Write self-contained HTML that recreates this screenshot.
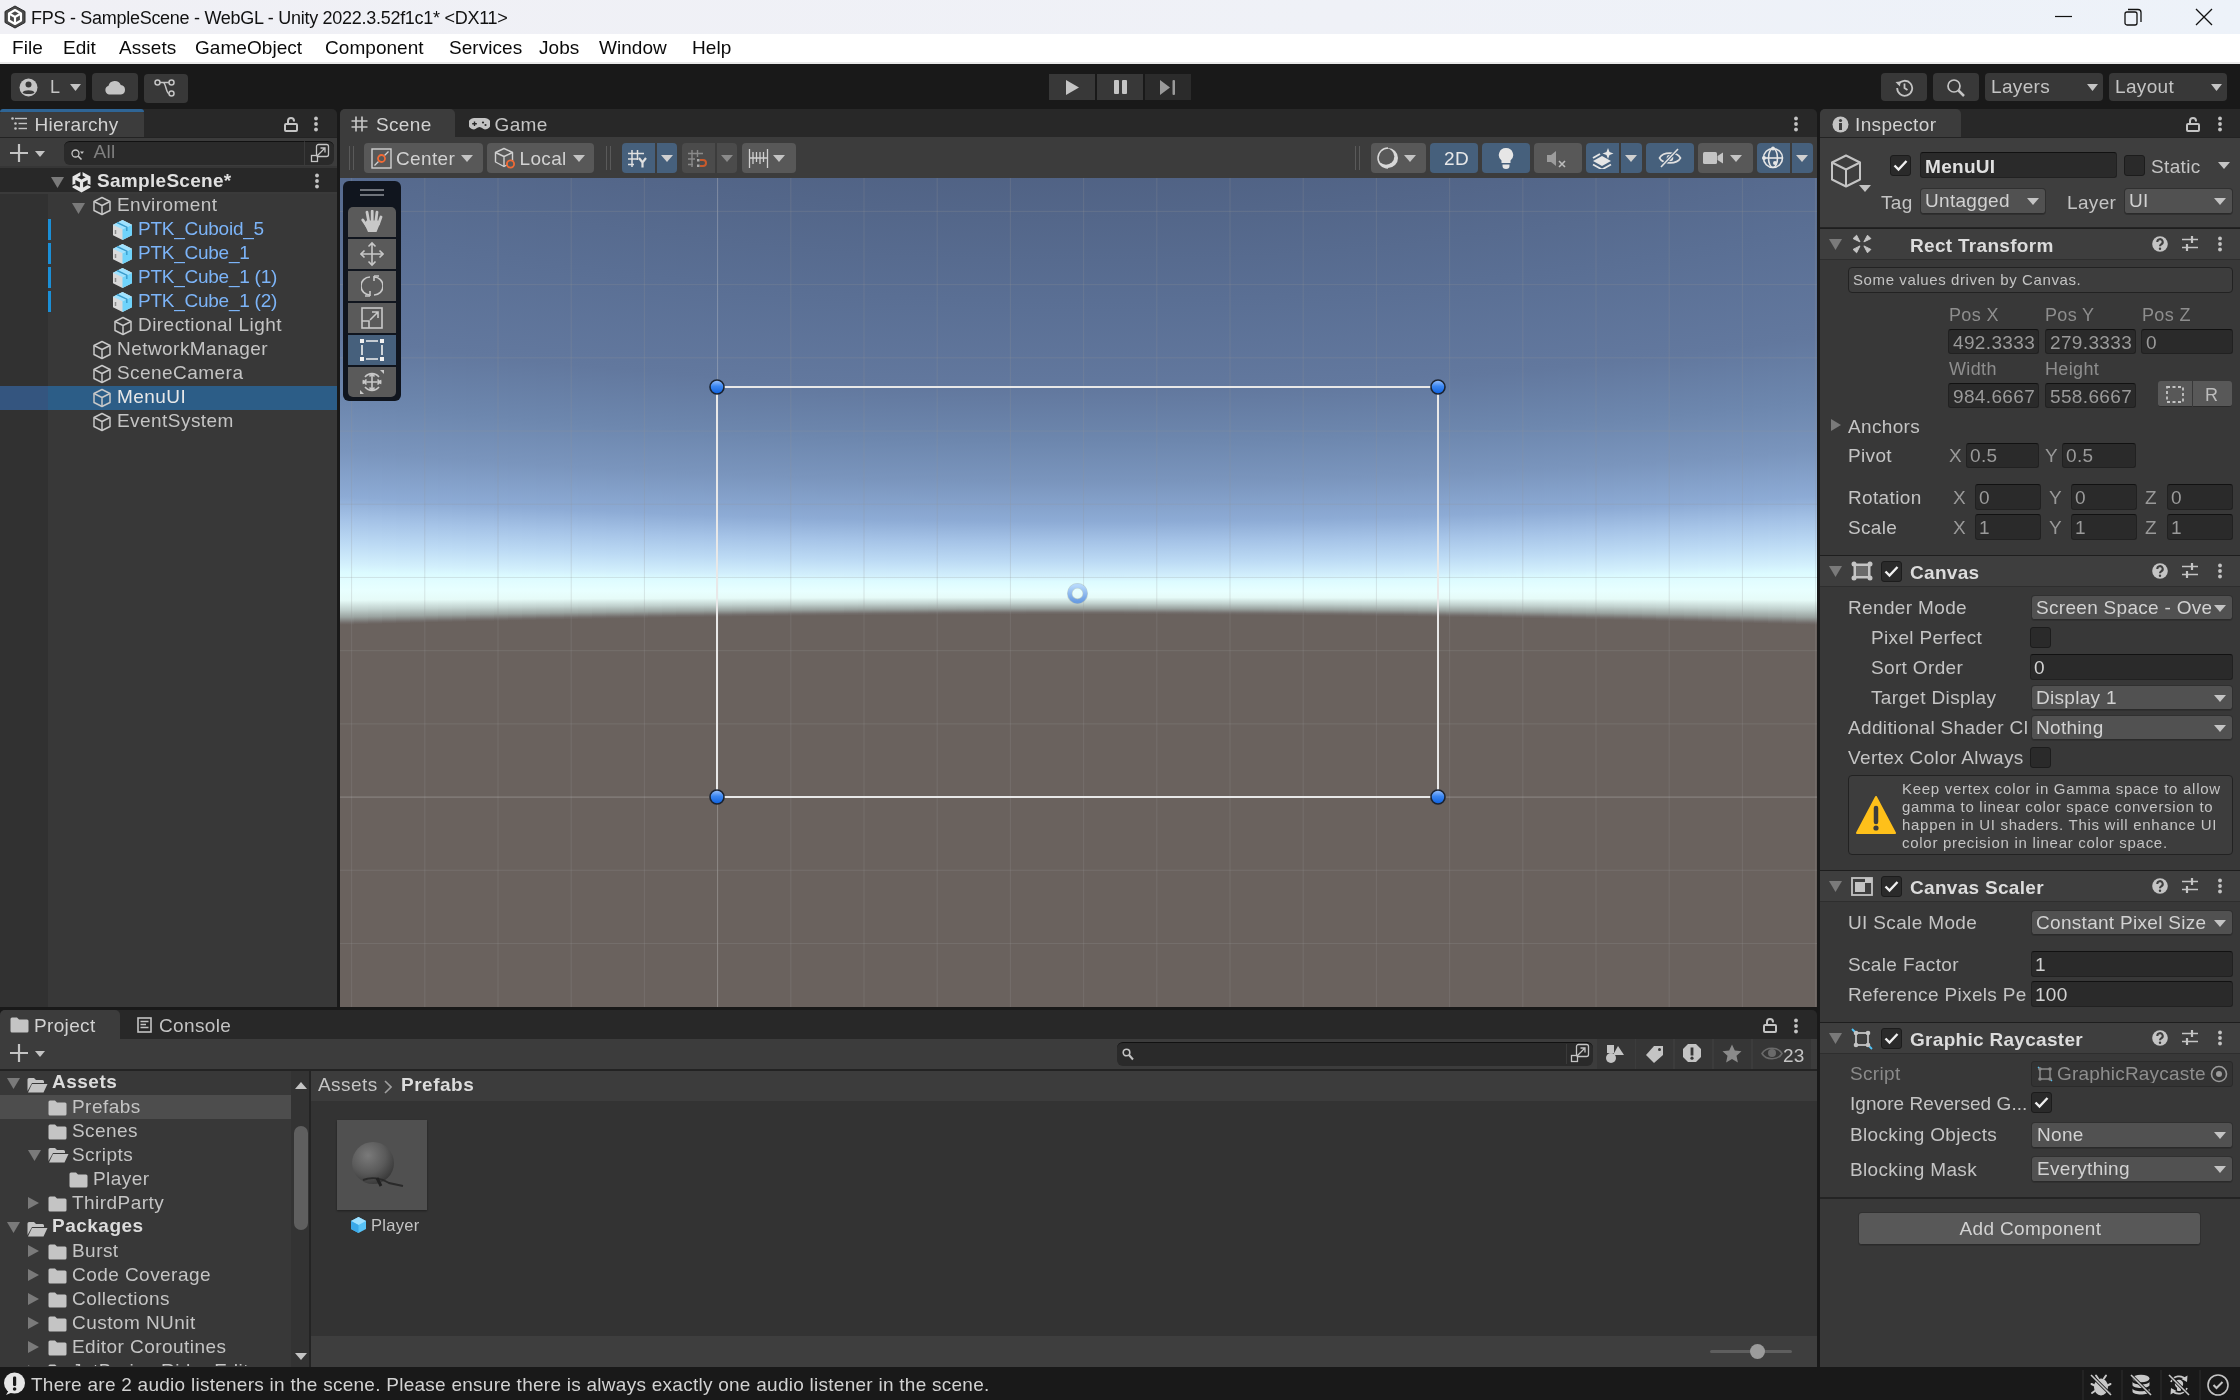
<!DOCTYPE html><html><head><meta charset="utf-8"><title>Unity</title><style>*{margin:0;padding:0;box-sizing:border-box}
html,body{width:2240px;height:1400px;overflow:hidden;background:#191919}
#r{will-change:transform;position:relative;width:2240px;height:1400px;overflow:hidden;font-family:"Liberation Sans",sans-serif}
#r>*{position:absolute}
.t{white-space:nowrap;line-height:1}
</style></head><body><div id="r"><div style="left:0px;top:0px;width:2240px;height:34px;background:linear-gradient(90deg,#f0f0f5 0%,#eff1f7 60%,#edf2f9 100%);"></div>
<div style="left:0px;top:34px;width:2240px;height:28px;background:#ffffff;"></div>
<div style="left:0px;top:62px;width:2240px;height:2px;background:#e9e9e9;"></div>
<div style="left:0px;top:64px;width:2240px;height:45px;background:#191919;"></div>
<div style="left:0px;top:109px;width:337px;height:28px;background:#282828;border-radius:5px 5px 0 0"></div>
<div style="left:0px;top:109px;width:144px;height:28px;background:#3c3c3c;border-radius:5px 5px 0 0"></div>
<div style="left:0px;top:109px;width:144px;height:3px;background:#2f6595;border-radius:5px 5px 0 0"></div>
<div style="left:0px;top:137px;width:337px;height:1px;background:#232323;"></div>
<div style="left:0px;top:138px;width:337px;height:28px;background:#3c3c3c;"></div>
<div style="left:0px;top:166px;width:337px;height:2px;background:#363636;"></div>
<div style="left:0px;top:168px;width:337px;height:24px;background:#282828;"></div>
<div style="left:0px;top:192px;width:337px;height:2px;background:#3a3a3a;"></div>
<div style="left:0px;top:194px;width:48px;height:813px;background:#313131;"></div>
<div style="left:48px;top:194px;width:289px;height:813px;background:#383838;"></div>
<div style="left:340px;top:109px;width:1477px;height:28px;background:#282828;border-radius:5px 5px 0 0"></div>
<div style="left:340px;top:109px;width:115px;height:28px;background:#3c3c3c;border-radius:5px 5px 0 0"></div>
<div style="left:340px;top:137px;width:1477px;height:41px;background:#3c3c3c;"></div>
<div style="left:1820px;top:109px;width:420px;height:29px;background:#282828;border-radius:5px 0 0 0"></div>
<div style="left:1820px;top:109px;width:141px;height:29px;background:#3c3c3c;border-radius:5px 5px 0 0"></div>
<div style="left:1820px;top:137px;width:420px;height:1px;background:#232323;"></div>
<div style="left:1820px;top:138px;width:420px;height:1229px;background:#383838;"></div>
<div style="left:0px;top:1010px;width:1817px;height:29px;background:#282828;border-radius:5px 5px 0 0"></div>
<div style="left:0px;top:1010px;width:120px;height:29px;background:#3c3c3c;border-radius:5px 5px 0 0"></div>
<div style="left:0px;top:1039px;width:1817px;height:30px;background:#3c3c3c;"></div>
<div style="left:0px;top:1069px;width:1817px;height:2px;background:#232323;"></div>
<div style="left:0px;top:1071px;width:291px;height:296px;background:#383838;"></div>
<div style="left:291px;top:1071px;width:18px;height:296px;background:#333333;"></div>
<div style="left:309px;top:1071px;width:2px;height:296px;background:#242424;"></div>
<div style="left:311px;top:1071px;width:1506px;height:30px;background:#3c3c3c;"></div>
<div style="left:311px;top:1101px;width:1506px;height:235px;background:#333333;"></div>
<div style="left:311px;top:1336px;width:1506px;height:31px;background:#3e3e3e;"></div>
<div style="left:0px;top:1367px;width:2240px;height:33px;background:#191919;"></div>
<div style="left:340px;top:178px;width:1477px;height:829px;background:#6a625e;overflow:hidden"><div style="position:absolute;left:0px;top:0;width:14px;height:829px;background:linear-gradient(180deg,#506284 -108.2px,#5a6f94 50.9px,#62789e 159.5px,#6d87ae 223.6px,#7a95bd 272.9px,#8dabd5 318.9px,#a5c3e7 341.8px,#bcdaf4 365.1px,#d2effc 385.6px,#dcfbff 394.7px,#e8ffff 412.2px,#e6fbf8 422.2px,#c0d0cd 431.7px,#9aa3a0 439.2px,#736e6c 444.8px,#6a625e 446.8px)"></div><div style="position:absolute;left:14px;top:0;width:14px;height:829px;background:linear-gradient(180deg,#506284 -104.3px,#5a6f94 53.7px,#62789e 161.4px,#6d87ae 225.1px,#7a95bd 274.1px,#8dabd5 319.8px,#a5c3e7 342.6px,#bcdaf4 365.8px,#d2effc 386.1px,#dcfbff 395.0px,#e8ffff 412.2px,#e6fbf8 422.1px,#c0d0cd 431.5px,#9aa3a0 438.9px,#736e6c 444.4px,#6a625e 446.4px)"></div><div style="position:absolute;left:28px;top:0;width:14px;height:829px;background:linear-gradient(180deg,#506284 -100.5px,#5a6f94 56.4px,#62789e 163.4px,#6d87ae 226.6px,#7a95bd 275.2px,#8dabd5 320.7px,#a5c3e7 343.4px,#bcdaf4 366.5px,#d2effc 386.6px,#dcfbff 395.3px,#e8ffff 412.3px,#e6fbf8 422.0px,#c0d0cd 431.2px,#9aa3a0 438.6px,#736e6c 444.0px,#6a625e 446.0px)"></div><div style="position:absolute;left:42px;top:0;width:14px;height:829px;background:linear-gradient(180deg,#506284 -96.7px,#5a6f94 59.0px,#62789e 165.3px,#6d87ae 228.0px,#7a95bd 276.3px,#8dabd5 321.6px,#a5c3e7 344.2px,#bcdaf4 367.1px,#d2effc 387.0px,#dcfbff 395.7px,#e8ffff 412.3px,#e6fbf8 421.9px,#c0d0cd 431.0px,#9aa3a0 438.2px,#736e6c 443.6px,#6a625e 445.6px)"></div><div style="position:absolute;left:56px;top:0;width:14px;height:829px;background:linear-gradient(180deg,#506284 -93.1px,#5a6f94 61.6px,#62789e 167.1px,#6d87ae 229.5px,#7a95bd 277.4px,#8dabd5 322.5px,#a5c3e7 345.0px,#bcdaf4 367.8px,#d2effc 387.5px,#dcfbff 396.0px,#e8ffff 412.4px,#e6fbf8 421.8px,#c0d0cd 430.8px,#9aa3a0 437.9px,#736e6c 443.2px,#6a625e 445.2px)"></div><div style="position:absolute;left:70px;top:0;width:14px;height:829px;background:linear-gradient(180deg,#506284 -89.5px,#5a6f94 64.1px,#62789e 168.9px,#6d87ae 230.9px,#7a95bd 278.5px,#8dabd5 323.4px,#a5c3e7 345.7px,#bcdaf4 368.4px,#d2effc 387.9px,#dcfbff 396.3px,#e8ffff 412.4px,#e6fbf8 421.7px,#c0d0cd 430.6px,#9aa3a0 437.6px,#736e6c 442.9px,#6a625e 444.9px)"></div><div style="position:absolute;left:84px;top:0;width:14px;height:829px;background:linear-gradient(180deg,#506284 -86.0px,#5a6f94 66.6px,#62789e 170.7px,#6d87ae 232.2px,#7a95bd 279.5px,#8dabd5 324.2px,#a5c3e7 346.5px,#bcdaf4 369.1px,#d2effc 388.4px,#dcfbff 396.6px,#e8ffff 412.5px,#e6fbf8 421.6px,#c0d0cd 430.4px,#9aa3a0 437.3px,#736e6c 442.5px,#6a625e 444.5px)"></div><div style="position:absolute;left:98px;top:0;width:14px;height:829px;background:linear-gradient(180deg,#506284 -82.5px,#5a6f94 69.1px,#62789e 172.5px,#6d87ae 233.6px,#7a95bd 280.6px,#8dabd5 325.0px,#a5c3e7 347.2px,#bcdaf4 369.7px,#d2effc 388.8px,#dcfbff 396.9px,#e8ffff 412.5px,#e6fbf8 421.5px,#c0d0cd 430.2px,#9aa3a0 437.0px,#736e6c 442.2px,#6a625e 444.2px)"></div><div style="position:absolute;left:112px;top:0;width:14px;height:829px;background:linear-gradient(180deg,#506284 -79.2px,#5a6f94 71.4px,#62789e 174.2px,#6d87ae 234.9px,#7a95bd 281.6px,#8dabd5 325.9px,#a5c3e7 347.9px,#bcdaf4 370.3px,#d2effc 389.2px,#dcfbff 397.2px,#e8ffff 412.5px,#e6fbf8 421.4px,#c0d0cd 430.0px,#9aa3a0 436.8px,#736e6c 441.9px,#6a625e 443.9px)"></div><div style="position:absolute;left:126px;top:0;width:14px;height:829px;background:linear-gradient(180deg,#506284 -75.9px,#5a6f94 73.8px,#62789e 175.8px,#6d87ae 236.2px,#7a95bd 282.6px,#8dabd5 326.6px,#a5c3e7 348.6px,#bcdaf4 370.9px,#d2effc 389.7px,#dcfbff 397.5px,#e8ffff 412.6px,#e6fbf8 421.3px,#c0d0cd 429.8px,#9aa3a0 436.5px,#736e6c 441.5px,#6a625e 443.5px)"></div><div style="position:absolute;left:140px;top:0;width:14px;height:829px;background:linear-gradient(180deg,#506284 -72.6px,#5a6f94 76.0px,#62789e 177.5px,#6d87ae 237.4px,#7a95bd 283.5px,#8dabd5 327.4px,#a5c3e7 349.3px,#bcdaf4 371.5px,#d2effc 390.1px,#dcfbff 397.7px,#e8ffff 412.6px,#e6fbf8 421.2px,#c0d0cd 429.6px,#9aa3a0 436.2px,#736e6c 441.2px,#6a625e 443.2px)"></div><div style="position:absolute;left:154px;top:0;width:14px;height:829px;background:linear-gradient(180deg,#506284 -69.5px,#5a6f94 78.3px,#62789e 179.1px,#6d87ae 238.6px,#7a95bd 284.4px,#8dabd5 328.2px,#a5c3e7 350.0px,#bcdaf4 372.0px,#d2effc 390.5px,#dcfbff 398.0px,#e8ffff 412.7px,#e6fbf8 421.2px,#c0d0cd 429.4px,#9aa3a0 435.9px,#736e6c 440.9px,#6a625e 442.9px)"></div><div style="position:absolute;left:168px;top:0;width:14px;height:829px;background:linear-gradient(180deg,#506284 -66.4px,#5a6f94 80.4px,#62789e 180.6px,#6d87ae 239.8px,#7a95bd 285.4px,#8dabd5 328.9px,#a5c3e7 350.6px,#bcdaf4 372.6px,#d2effc 390.8px,#dcfbff 398.3px,#e8ffff 412.7px,#e6fbf8 421.1px,#c0d0cd 429.2px,#9aa3a0 435.7px,#736e6c 440.6px,#6a625e 442.6px)"></div><div style="position:absolute;left:182px;top:0;width:14px;height:829px;background:linear-gradient(180deg,#506284 -63.5px,#5a6f94 82.5px,#62789e 182.1px,#6d87ae 241.0px,#7a95bd 286.2px,#8dabd5 329.6px,#a5c3e7 351.2px,#bcdaf4 373.1px,#d2effc 391.2px,#dcfbff 398.5px,#e8ffff 412.7px,#e6fbf8 421.0px,#c0d0cd 429.0px,#9aa3a0 435.4px,#736e6c 440.3px,#6a625e 442.3px)"></div><div style="position:absolute;left:196px;top:0;width:14px;height:829px;background:linear-gradient(180deg,#506284 -60.5px,#5a6f94 84.6px,#62789e 183.6px,#6d87ae 242.1px,#7a95bd 287.1px,#8dabd5 330.3px,#a5c3e7 351.9px,#bcdaf4 373.6px,#d2effc 391.6px,#dcfbff 398.8px,#e8ffff 412.8px,#e6fbf8 420.9px,#c0d0cd 428.8px,#9aa3a0 435.2px,#736e6c 440.0px,#6a625e 442.0px)"></div><div style="position:absolute;left:210px;top:0;width:14px;height:829px;background:linear-gradient(180deg,#506284 -57.7px,#5a6f94 86.6px,#62789e 185.0px,#6d87ae 243.2px,#7a95bd 288.0px,#8dabd5 331.0px,#a5c3e7 352.5px,#bcdaf4 374.1px,#d2effc 391.9px,#dcfbff 399.0px,#e8ffff 412.8px,#e6fbf8 420.9px,#c0d0cd 428.7px,#9aa3a0 434.9px,#736e6c 439.7px,#6a625e 441.7px)"></div><div style="position:absolute;left:224px;top:0;width:14px;height:829px;background:linear-gradient(180deg,#506284 -54.9px,#5a6f94 88.6px,#62789e 186.4px,#6d87ae 244.3px,#7a95bd 288.8px,#8dabd5 331.7px,#a5c3e7 353.0px,#bcdaf4 374.6px,#d2effc 392.3px,#dcfbff 399.3px,#e8ffff 412.9px,#e6fbf8 420.8px,#c0d0cd 428.5px,#9aa3a0 434.7px,#736e6c 439.4px,#6a625e 441.4px)"></div><div style="position:absolute;left:238px;top:0;width:14px;height:829px;background:linear-gradient(180deg,#506284 -52.2px,#5a6f94 90.5px,#62789e 187.8px,#6d87ae 245.3px,#7a95bd 289.6px,#8dabd5 332.3px,#a5c3e7 353.6px,#bcdaf4 375.1px,#d2effc 392.6px,#dcfbff 399.5px,#e8ffff 412.9px,#e6fbf8 420.7px,#c0d0cd 428.3px,#9aa3a0 434.5px,#736e6c 439.2px,#6a625e 441.2px)"></div><div style="position:absolute;left:252px;top:0;width:14px;height:829px;background:linear-gradient(180deg,#506284 -49.6px,#5a6f94 92.3px,#62789e 189.1px,#6d87ae 246.4px,#7a95bd 290.4px,#8dabd5 332.9px,#a5c3e7 354.2px,#bcdaf4 375.6px,#d2effc 393.0px,#dcfbff 399.7px,#e8ffff 412.9px,#e6fbf8 420.6px,#c0d0cd 428.2px,#9aa3a0 434.2px,#736e6c 438.9px,#6a625e 440.9px)"></div><div style="position:absolute;left:266px;top:0;width:14px;height:829px;background:linear-gradient(180deg,#506284 -47.1px,#5a6f94 94.1px,#62789e 190.4px,#6d87ae 247.3px,#7a95bd 291.1px,#8dabd5 333.5px,#a5c3e7 354.7px,#bcdaf4 376.0px,#d2effc 393.3px,#dcfbff 399.9px,#e8ffff 413.0px,#e6fbf8 420.6px,#c0d0cd 428.0px,#9aa3a0 434.0px,#736e6c 438.7px,#6a625e 440.7px)"></div><div style="position:absolute;left:280px;top:0;width:14px;height:829px;background:linear-gradient(180deg,#506284 -44.6px,#5a6f94 95.8px,#62789e 191.7px,#6d87ae 248.3px,#7a95bd 291.9px,#8dabd5 334.1px,#a5c3e7 355.2px,#bcdaf4 376.5px,#d2effc 393.6px,#dcfbff 400.1px,#e8ffff 413.0px,#e6fbf8 420.5px,#c0d0cd 427.9px,#9aa3a0 433.8px,#736e6c 438.4px,#6a625e 440.4px)"></div><div style="position:absolute;left:294px;top:0;width:14px;height:829px;background:linear-gradient(180deg,#506284 -42.2px,#5a6f94 97.5px,#62789e 192.9px,#6d87ae 249.2px,#7a95bd 292.6px,#8dabd5 334.7px,#a5c3e7 355.7px,#bcdaf4 376.9px,#d2effc 393.9px,#dcfbff 400.3px,#e8ffff 413.0px,#e6fbf8 420.5px,#c0d0cd 427.7px,#9aa3a0 433.6px,#736e6c 438.2px,#6a625e 440.2px)"></div><div style="position:absolute;left:308px;top:0;width:14px;height:829px;background:linear-gradient(180deg,#506284 -39.9px,#5a6f94 99.2px,#62789e 194.1px,#6d87ae 250.1px,#7a95bd 293.3px,#8dabd5 335.3px,#a5c3e7 356.2px,#bcdaf4 377.3px,#d2effc 394.2px,#dcfbff 400.5px,#e8ffff 413.1px,#e6fbf8 420.4px,#c0d0cd 427.6px,#9aa3a0 433.4px,#736e6c 437.9px,#6a625e 439.9px)"></div><div style="position:absolute;left:322px;top:0;width:14px;height:829px;background:linear-gradient(180deg,#506284 -37.7px,#5a6f94 100.8px,#62789e 195.2px,#6d87ae 251.0px,#7a95bd 293.9px,#8dabd5 335.8px,#a5c3e7 356.7px,#bcdaf4 377.7px,#d2effc 394.5px,#dcfbff 400.7px,#e8ffff 413.1px,#e6fbf8 420.3px,#c0d0cd 427.4px,#9aa3a0 433.2px,#736e6c 437.7px,#6a625e 439.7px)"></div><div style="position:absolute;left:336px;top:0;width:14px;height:829px;background:linear-gradient(180deg,#506284 -35.5px,#5a6f94 102.3px,#62789e 196.3px,#6d87ae 251.8px,#7a95bd 294.6px,#8dabd5 336.3px,#a5c3e7 357.1px,#bcdaf4 378.1px,#d2effc 394.7px,#dcfbff 400.9px,#e8ffff 413.1px,#e6fbf8 420.3px,#c0d0cd 427.3px,#9aa3a0 433.0px,#736e6c 437.5px,#6a625e 439.5px)"></div><div style="position:absolute;left:350px;top:0;width:14px;height:829px;background:linear-gradient(180deg,#506284 -33.4px,#5a6f94 103.8px,#62789e 197.3px,#6d87ae 252.6px,#7a95bd 295.2px,#8dabd5 336.8px,#a5c3e7 357.6px,#bcdaf4 378.5px,#d2effc 395.0px,#dcfbff 401.1px,#e8ffff 413.1px,#e6fbf8 420.2px,#c0d0cd 427.2px,#9aa3a0 432.9px,#736e6c 437.3px,#6a625e 439.3px)"></div><div style="position:absolute;left:364px;top:0;width:14px;height:829px;background:linear-gradient(180deg,#506284 -31.4px,#5a6f94 105.2px,#62789e 198.4px,#6d87ae 253.4px,#7a95bd 295.8px,#8dabd5 337.3px,#a5c3e7 358.0px,#bcdaf4 378.9px,#d2effc 395.2px,#dcfbff 401.3px,#e8ffff 413.2px,#e6fbf8 420.2px,#c0d0cd 427.1px,#9aa3a0 432.7px,#736e6c 437.1px,#6a625e 439.1px)"></div><div style="position:absolute;left:378px;top:0;width:14px;height:829px;background:linear-gradient(180deg,#506284 -29.5px,#5a6f94 106.5px,#62789e 199.3px,#6d87ae 254.2px,#7a95bd 296.4px,#8dabd5 337.8px,#a5c3e7 358.4px,#bcdaf4 379.2px,#d2effc 395.5px,#dcfbff 401.4px,#e8ffff 413.2px,#e6fbf8 420.1px,#c0d0cd 427.0px,#9aa3a0 432.5px,#736e6c 436.9px,#6a625e 438.9px)"></div><div style="position:absolute;left:392px;top:0;width:14px;height:829px;background:linear-gradient(180deg,#506284 -27.6px,#5a6f94 107.9px,#62789e 200.3px,#6d87ae 254.9px,#7a95bd 296.9px,#8dabd5 338.2px,#a5c3e7 358.8px,#bcdaf4 379.5px,#d2effc 395.7px,#dcfbff 401.6px,#e8ffff 413.2px,#e6fbf8 420.1px,#c0d0cd 426.8px,#9aa3a0 432.4px,#736e6c 436.7px,#6a625e 438.7px)"></div><div style="position:absolute;left:406px;top:0;width:14px;height:829px;background:linear-gradient(180deg,#506284 -25.8px,#5a6f94 109.1px,#62789e 201.2px,#6d87ae 255.6px,#7a95bd 297.4px,#8dabd5 338.6px,#a5c3e7 359.2px,#bcdaf4 379.9px,#d2effc 395.9px,#dcfbff 401.8px,#e8ffff 413.2px,#e6fbf8 420.0px,#c0d0cd 426.7px,#9aa3a0 432.2px,#736e6c 436.5px,#6a625e 438.5px)"></div><div style="position:absolute;left:420px;top:0;width:14px;height:829px;background:linear-gradient(180deg,#506284 -24.1px,#5a6f94 110.3px,#62789e 202.1px,#6d87ae 256.3px,#7a95bd 298.0px,#8dabd5 339.0px,#a5c3e7 359.6px,#bcdaf4 380.2px,#d2effc 396.2px,#dcfbff 401.9px,#e8ffff 413.3px,#e6fbf8 420.0px,#c0d0cd 426.6px,#9aa3a0 432.1px,#736e6c 436.4px,#6a625e 438.4px)"></div><div style="position:absolute;left:434px;top:0;width:14px;height:829px;background:linear-gradient(180deg,#506284 -22.5px,#5a6f94 111.5px,#62789e 202.9px,#6d87ae 256.9px,#7a95bd 298.4px,#8dabd5 339.4px,#a5c3e7 359.9px,#bcdaf4 380.5px,#d2effc 396.4px,#dcfbff 402.0px,#e8ffff 413.3px,#e6fbf8 419.9px,#c0d0cd 426.5px,#9aa3a0 431.9px,#736e6c 436.2px,#6a625e 438.2px)"></div><div style="position:absolute;left:448px;top:0;width:14px;height:829px;background:linear-gradient(180deg,#506284 -20.9px,#5a6f94 112.6px,#62789e 203.7px,#6d87ae 257.5px,#7a95bd 298.9px,#8dabd5 339.8px,#a5c3e7 360.2px,#bcdaf4 380.7px,#d2effc 396.6px,#dcfbff 402.2px,#e8ffff 413.3px,#e6fbf8 419.9px,#c0d0cd 426.4px,#9aa3a0 431.8px,#736e6c 436.0px,#6a625e 438.0px)"></div><div style="position:absolute;left:462px;top:0;width:14px;height:829px;background:linear-gradient(180deg,#506284 -19.4px,#5a6f94 113.6px,#62789e 204.4px,#6d87ae 258.1px,#7a95bd 299.3px,#8dabd5 340.2px,#a5c3e7 360.5px,#bcdaf4 381.0px,#d2effc 396.7px,#dcfbff 402.3px,#e8ffff 413.3px,#e6fbf8 419.9px,#c0d0cd 426.3px,#9aa3a0 431.7px,#736e6c 435.9px,#6a625e 437.9px)"></div><div style="position:absolute;left:476px;top:0;width:14px;height:829px;background:linear-gradient(180deg,#506284 -18.0px,#5a6f94 114.6px,#62789e 205.2px,#6d87ae 258.6px,#7a95bd 299.8px,#8dabd5 340.5px,#a5c3e7 360.8px,#bcdaf4 381.3px,#d2effc 396.9px,#dcfbff 402.4px,#e8ffff 413.3px,#e6fbf8 419.8px,#c0d0cd 426.3px,#9aa3a0 431.6px,#736e6c 435.8px,#6a625e 437.8px)"></div><div style="position:absolute;left:490px;top:0;width:14px;height:829px;background:linear-gradient(180deg,#506284 -16.7px,#5a6f94 115.6px,#62789e 205.8px,#6d87ae 259.1px,#7a95bd 300.2px,#8dabd5 340.8px,#a5c3e7 361.1px,#bcdaf4 381.5px,#d2effc 397.1px,#dcfbff 402.5px,#e8ffff 413.4px,#e6fbf8 419.8px,#c0d0cd 426.2px,#9aa3a0 431.5px,#736e6c 435.6px,#6a625e 437.6px)"></div><div style="position:absolute;left:504px;top:0;width:14px;height:829px;background:linear-gradient(180deg,#506284 -15.4px,#5a6f94 116.5px,#62789e 206.5px,#6d87ae 259.6px,#7a95bd 300.5px,#8dabd5 341.1px,#a5c3e7 361.4px,#bcdaf4 381.7px,#d2effc 397.3px,#dcfbff 402.6px,#e8ffff 413.4px,#e6fbf8 419.8px,#c0d0cd 426.1px,#9aa3a0 431.3px,#736e6c 435.5px,#6a625e 437.5px)"></div><div style="position:absolute;left:518px;top:0;width:14px;height:829px;background:linear-gradient(180deg,#506284 -14.2px,#5a6f94 117.3px,#62789e 207.1px,#6d87ae 260.1px,#7a95bd 300.9px,#8dabd5 341.4px,#a5c3e7 361.6px,#bcdaf4 381.9px,#d2effc 397.4px,#dcfbff 402.7px,#e8ffff 413.4px,#e6fbf8 419.7px,#c0d0cd 426.0px,#9aa3a0 431.2px,#736e6c 435.4px,#6a625e 437.4px)"></div><div style="position:absolute;left:532px;top:0;width:14px;height:829px;background:linear-gradient(180deg,#506284 -13.1px,#5a6f94 118.1px,#62789e 207.6px,#6d87ae 260.5px,#7a95bd 301.2px,#8dabd5 341.7px,#a5c3e7 361.9px,#bcdaf4 382.1px,#d2effc 397.5px,#dcfbff 402.8px,#e8ffff 413.4px,#e6fbf8 419.7px,#c0d0cd 426.0px,#9aa3a0 431.1px,#736e6c 435.3px,#6a625e 437.3px)"></div><div style="position:absolute;left:546px;top:0;width:14px;height:829px;background:linear-gradient(180deg,#506284 -12.1px,#5a6f94 118.8px,#62789e 208.2px,#6d87ae 260.9px,#7a95bd 301.5px,#8dabd5 341.9px,#a5c3e7 362.1px,#bcdaf4 382.3px,#d2effc 397.7px,#dcfbff 402.9px,#e8ffff 413.4px,#e6fbf8 419.7px,#c0d0cd 425.9px,#9aa3a0 431.1px,#736e6c 435.2px,#6a625e 437.2px)"></div><div style="position:absolute;left:560px;top:0;width:14px;height:829px;background:linear-gradient(180deg,#506284 -11.1px,#5a6f94 119.5px,#62789e 208.6px,#6d87ae 261.3px,#7a95bd 301.8px,#8dabd5 342.1px,#a5c3e7 362.3px,#bcdaf4 382.5px,#d2effc 397.8px,#dcfbff 403.0px,#e8ffff 413.4px,#e6fbf8 419.6px,#c0d0cd 425.8px,#9aa3a0 431.0px,#736e6c 435.1px,#6a625e 437.1px)"></div><div style="position:absolute;left:574px;top:0;width:14px;height:829px;background:linear-gradient(180deg,#506284 -10.3px,#5a6f94 120.1px,#62789e 209.1px,#6d87ae 261.6px,#7a95bd 302.1px,#8dabd5 342.4px,#a5c3e7 362.5px,#bcdaf4 382.6px,#d2effc 397.9px,#dcfbff 403.1px,#e8ffff 413.4px,#e6fbf8 419.6px,#c0d0cd 425.8px,#9aa3a0 430.9px,#736e6c 435.0px,#6a625e 437.0px)"></div><div style="position:absolute;left:588px;top:0;width:14px;height:829px;background:linear-gradient(180deg,#506284 -9.5px,#5a6f94 120.7px,#62789e 209.5px,#6d87ae 262.0px,#7a95bd 302.3px,#8dabd5 342.6px,#a5c3e7 362.7px,#bcdaf4 382.8px,#d2effc 398.0px,#dcfbff 403.2px,#e8ffff 413.4px,#e6fbf8 419.6px,#c0d0cd 425.7px,#9aa3a0 430.8px,#736e6c 434.9px,#6a625e 436.9px)"></div><div style="position:absolute;left:602px;top:0;width:14px;height:829px;background:linear-gradient(180deg,#506284 -8.7px,#5a6f94 121.2px,#62789e 209.9px,#6d87ae 262.2px,#7a95bd 302.5px,#8dabd5 342.7px,#a5c3e7 362.8px,#bcdaf4 382.9px,#d2effc 398.1px,#dcfbff 403.2px,#e8ffff 413.5px,#e6fbf8 419.6px,#c0d0cd 425.7px,#9aa3a0 430.8px,#736e6c 434.8px,#6a625e 436.8px)"></div><div style="position:absolute;left:616px;top:0;width:14px;height:829px;background:linear-gradient(180deg,#506284 -8.1px,#5a6f94 121.7px,#62789e 210.2px,#6d87ae 262.5px,#7a95bd 302.7px,#8dabd5 342.9px,#a5c3e7 363.0px,#bcdaf4 383.0px,#d2effc 398.2px,#dcfbff 403.3px,#e8ffff 413.5px,#e6fbf8 419.6px,#c0d0cd 425.7px,#9aa3a0 430.7px,#736e6c 434.8px,#6a625e 436.8px)"></div><div style="position:absolute;left:630px;top:0;width:14px;height:829px;background:linear-gradient(180deg,#506284 -7.5px,#5a6f94 122.1px,#62789e 210.5px,#6d87ae 262.7px,#7a95bd 302.9px,#8dabd5 343.0px,#a5c3e7 363.1px,#bcdaf4 383.1px,#d2effc 398.3px,#dcfbff 403.3px,#e8ffff 413.5px,#e6fbf8 419.6px,#c0d0cd 425.6px,#9aa3a0 430.7px,#736e6c 434.7px,#6a625e 436.7px)"></div><div style="position:absolute;left:644px;top:0;width:14px;height:829px;background:linear-gradient(180deg,#506284 -7.0px,#5a6f94 122.5px,#62789e 210.8px,#6d87ae 262.9px,#7a95bd 303.1px,#8dabd5 343.1px,#a5c3e7 363.2px,#bcdaf4 383.2px,#d2effc 398.3px,#dcfbff 403.4px,#e8ffff 413.5px,#e6fbf8 419.5px,#c0d0cd 425.6px,#9aa3a0 430.6px,#736e6c 434.6px,#6a625e 436.6px)"></div><div style="position:absolute;left:658px;top:0;width:14px;height:829px;background:linear-gradient(180deg,#506284 -6.5px,#5a6f94 122.8px,#62789e 211.0px,#6d87ae 263.1px,#7a95bd 303.2px,#8dabd5 343.3px,#a5c3e7 363.3px,#bcdaf4 383.3px,#d2effc 398.4px,#dcfbff 403.4px,#e8ffff 413.5px,#e6fbf8 419.5px,#c0d0cd 425.6px,#9aa3a0 430.6px,#736e6c 434.6px,#6a625e 436.6px)"></div><div style="position:absolute;left:672px;top:0;width:14px;height:829px;background:linear-gradient(180deg,#506284 -6.2px,#5a6f94 123.0px,#62789e 211.2px,#6d87ae 263.2px,#7a95bd 303.3px,#8dabd5 343.3px,#a5c3e7 363.4px,#bcdaf4 383.4px,#d2effc 398.4px,#dcfbff 403.4px,#e8ffff 413.5px,#e6fbf8 419.5px,#c0d0cd 425.5px,#9aa3a0 430.6px,#736e6c 434.6px,#6a625e 436.6px)"></div><div style="position:absolute;left:686px;top:0;width:14px;height:829px;background:linear-gradient(180deg,#506284 -5.9px,#5a6f94 123.2px,#62789e 211.3px,#6d87ae 263.3px,#7a95bd 303.4px,#8dabd5 343.4px,#a5c3e7 363.4px,#bcdaf4 383.4px,#d2effc 398.5px,#dcfbff 403.5px,#e8ffff 413.5px,#e6fbf8 419.5px,#c0d0cd 425.5px,#9aa3a0 430.5px,#736e6c 434.5px,#6a625e 436.5px)"></div><div style="position:absolute;left:700px;top:0;width:14px;height:829px;background:linear-gradient(180deg,#506284 -5.7px,#5a6f94 123.4px,#62789e 211.4px,#6d87ae 263.4px,#7a95bd 303.4px,#8dabd5 343.5px,#a5c3e7 363.5px,#bcdaf4 383.5px,#d2effc 398.5px,#dcfbff 403.5px,#e8ffff 413.5px,#e6fbf8 419.5px,#c0d0cd 425.5px,#9aa3a0 430.5px,#736e6c 434.5px,#6a625e 436.5px)"></div><div style="position:absolute;left:714px;top:0;width:14px;height:829px;background:linear-gradient(180deg,#506284 -5.6px,#5a6f94 123.5px,#62789e 211.5px,#6d87ae 263.5px,#7a95bd 303.5px,#8dabd5 343.5px,#a5c3e7 363.5px,#bcdaf4 383.5px,#d2effc 398.5px,#dcfbff 403.5px,#e8ffff 413.5px,#e6fbf8 419.5px,#c0d0cd 425.5px,#9aa3a0 430.5px,#736e6c 434.5px,#6a625e 436.5px)"></div><div style="position:absolute;left:728px;top:0;width:14px;height:829px;background:linear-gradient(180deg,#506284 -5.5px,#5a6f94 123.5px,#62789e 211.5px,#6d87ae 263.5px,#7a95bd 303.5px,#8dabd5 343.5px,#a5c3e7 363.5px,#bcdaf4 383.5px,#d2effc 398.5px,#dcfbff 403.5px,#e8ffff 413.5px,#e6fbf8 419.5px,#c0d0cd 425.5px,#9aa3a0 430.5px,#736e6c 434.5px,#6a625e 436.5px)"></div><div style="position:absolute;left:742px;top:0;width:14px;height:829px;background:linear-gradient(180deg,#506284 -5.5px,#5a6f94 123.5px,#62789e 211.5px,#6d87ae 263.5px,#7a95bd 303.5px,#8dabd5 343.5px,#a5c3e7 363.5px,#bcdaf4 383.5px,#d2effc 398.5px,#dcfbff 403.5px,#e8ffff 413.5px,#e6fbf8 419.5px,#c0d0cd 425.5px,#9aa3a0 430.5px,#736e6c 434.5px,#6a625e 436.5px)"></div><div style="position:absolute;left:756px;top:0;width:14px;height:829px;background:linear-gradient(180deg,#506284 -5.6px,#5a6f94 123.4px,#62789e 211.4px,#6d87ae 263.5px,#7a95bd 303.5px,#8dabd5 343.5px,#a5c3e7 363.5px,#bcdaf4 383.5px,#d2effc 398.5px,#dcfbff 403.5px,#e8ffff 413.5px,#e6fbf8 419.5px,#c0d0cd 425.5px,#9aa3a0 430.5px,#736e6c 434.5px,#6a625e 436.5px)"></div><div style="position:absolute;left:770px;top:0;width:14px;height:829px;background:linear-gradient(180deg,#506284 -5.8px,#5a6f94 123.3px,#62789e 211.4px,#6d87ae 263.4px,#7a95bd 303.4px,#8dabd5 343.4px,#a5c3e7 363.4px,#bcdaf4 383.4px,#d2effc 398.5px,#dcfbff 403.5px,#e8ffff 413.5px,#e6fbf8 419.5px,#c0d0cd 425.5px,#9aa3a0 430.5px,#736e6c 434.5px,#6a625e 436.5px)"></div><div style="position:absolute;left:784px;top:0;width:14px;height:829px;background:linear-gradient(180deg,#506284 -6.0px,#5a6f94 123.1px,#62789e 211.2px,#6d87ae 263.3px,#7a95bd 303.3px,#8dabd5 343.4px,#a5c3e7 363.4px,#bcdaf4 383.4px,#d2effc 398.4px,#dcfbff 403.5px,#e8ffff 413.5px,#e6fbf8 419.5px,#c0d0cd 425.5px,#9aa3a0 430.5px,#736e6c 434.6px,#6a625e 436.6px)"></div><div style="position:absolute;left:798px;top:0;width:14px;height:829px;background:linear-gradient(180deg,#506284 -6.3px,#5a6f94 122.9px,#62789e 211.1px,#6d87ae 263.2px,#7a95bd 303.2px,#8dabd5 343.3px,#a5c3e7 363.3px,#bcdaf4 383.3px,#d2effc 398.4px,#dcfbff 403.4px,#e8ffff 413.5px,#e6fbf8 419.5px,#c0d0cd 425.6px,#9aa3a0 430.6px,#736e6c 434.6px,#6a625e 436.6px)"></div><div style="position:absolute;left:812px;top:0;width:14px;height:829px;background:linear-gradient(180deg,#506284 -6.7px,#5a6f94 122.6px,#62789e 210.9px,#6d87ae 263.0px,#7a95bd 303.1px,#8dabd5 343.2px,#a5c3e7 363.2px,#bcdaf4 383.3px,#d2effc 398.3px,#dcfbff 403.4px,#e8ffff 413.5px,#e6fbf8 419.5px,#c0d0cd 425.6px,#9aa3a0 430.6px,#736e6c 434.6px,#6a625e 436.6px)"></div><div style="position:absolute;left:826px;top:0;width:14px;height:829px;background:linear-gradient(180deg,#506284 -7.2px,#5a6f94 122.3px,#62789e 210.6px,#6d87ae 262.8px,#7a95bd 303.0px,#8dabd5 343.1px,#a5c3e7 363.1px,#bcdaf4 383.2px,#d2effc 398.3px,#dcfbff 403.4px,#e8ffff 413.5px,#e6fbf8 419.5px,#c0d0cd 425.6px,#9aa3a0 430.6px,#736e6c 434.7px,#6a625e 436.7px)"></div><div style="position:absolute;left:840px;top:0;width:14px;height:829px;background:linear-gradient(180deg,#506284 -7.8px,#5a6f94 121.9px,#62789e 210.4px,#6d87ae 262.6px,#7a95bd 302.8px,#8dabd5 343.0px,#a5c3e7 363.0px,#bcdaf4 383.1px,#d2effc 398.2px,#dcfbff 403.3px,#e8ffff 413.5px,#e6fbf8 419.6px,#c0d0cd 425.6px,#9aa3a0 430.7px,#736e6c 434.7px,#6a625e 436.7px)"></div><div style="position:absolute;left:854px;top:0;width:14px;height:829px;background:linear-gradient(180deg,#506284 -8.4px,#5a6f94 121.5px,#62789e 210.0px,#6d87ae 262.4px,#7a95bd 302.6px,#8dabd5 342.8px,#a5c3e7 362.9px,#bcdaf4 383.0px,#d2effc 398.1px,#dcfbff 403.3px,#e8ffff 413.5px,#e6fbf8 419.6px,#c0d0cd 425.7px,#9aa3a0 430.7px,#736e6c 434.8px,#6a625e 436.8px)"></div><div style="position:absolute;left:868px;top:0;width:14px;height:829px;background:linear-gradient(180deg,#506284 -9.1px,#5a6f94 121.0px,#62789e 209.7px,#6d87ae 262.1px,#7a95bd 302.4px,#8dabd5 342.6px,#a5c3e7 362.7px,#bcdaf4 382.9px,#d2effc 398.1px,#dcfbff 403.2px,#e8ffff 413.5px,#e6fbf8 419.6px,#c0d0cd 425.7px,#9aa3a0 430.8px,#736e6c 434.9px,#6a625e 436.9px)"></div><div style="position:absolute;left:882px;top:0;width:14px;height:829px;background:linear-gradient(180deg,#506284 -9.8px,#5a6f94 120.4px,#62789e 209.3px,#6d87ae 261.8px,#7a95bd 302.2px,#8dabd5 342.5px,#a5c3e7 362.6px,#bcdaf4 382.7px,#d2effc 398.0px,#dcfbff 403.1px,#e8ffff 413.4px,#e6fbf8 419.6px,#c0d0cd 425.8px,#9aa3a0 430.9px,#736e6c 434.9px,#6a625e 436.9px)"></div><div style="position:absolute;left:896px;top:0;width:14px;height:829px;background:linear-gradient(180deg,#506284 -10.7px,#5a6f94 119.8px,#62789e 208.9px,#6d87ae 261.5px,#7a95bd 302.0px,#8dabd5 342.3px,#a5c3e7 362.4px,#bcdaf4 382.6px,#d2effc 397.8px,#dcfbff 403.1px,#e8ffff 413.4px,#e6fbf8 419.6px,#c0d0cd 425.8px,#9aa3a0 430.9px,#736e6c 435.0px,#6a625e 437.0px)"></div><div style="position:absolute;left:910px;top:0;width:14px;height:829px;background:linear-gradient(180deg,#506284 -11.6px,#5a6f94 119.2px,#62789e 208.4px,#6d87ae 261.1px,#7a95bd 301.7px,#8dabd5 342.0px,#a5c3e7 362.2px,#bcdaf4 382.4px,#d2effc 397.7px,#dcfbff 403.0px,#e8ffff 413.4px,#e6fbf8 419.7px,#c0d0cd 425.9px,#9aa3a0 431.0px,#736e6c 435.1px,#6a625e 437.1px)"></div><div style="position:absolute;left:924px;top:0;width:14px;height:829px;background:linear-gradient(180deg,#506284 -12.6px,#5a6f94 118.5px,#62789e 207.9px,#6d87ae 260.7px,#7a95bd 301.4px,#8dabd5 341.8px,#a5c3e7 362.0px,#bcdaf4 382.2px,#d2effc 397.6px,#dcfbff 402.9px,#e8ffff 413.4px,#e6fbf8 419.7px,#c0d0cd 425.9px,#9aa3a0 431.1px,#736e6c 435.2px,#6a625e 437.2px)"></div><div style="position:absolute;left:938px;top:0;width:14px;height:829px;background:linear-gradient(180deg,#506284 -13.7px,#5a6f94 117.7px,#62789e 207.4px,#6d87ae 260.3px,#7a95bd 301.1px,#8dabd5 341.5px,#a5c3e7 361.8px,#bcdaf4 382.0px,#d2effc 397.5px,#dcfbff 402.8px,#e8ffff 413.4px,#e6fbf8 419.7px,#c0d0cd 426.0px,#9aa3a0 431.2px,#736e6c 435.3px,#6a625e 437.3px)"></div><div style="position:absolute;left:952px;top:0;width:14px;height:829px;background:linear-gradient(180deg,#506284 -14.8px,#5a6f94 116.9px,#62789e 206.8px,#6d87ae 259.9px,#7a95bd 300.7px,#8dabd5 341.3px,#a5c3e7 361.5px,#bcdaf4 381.8px,#d2effc 397.3px,#dcfbff 402.7px,#e8ffff 413.4px,#e6fbf8 419.7px,#c0d0cd 426.1px,#9aa3a0 431.3px,#736e6c 435.4px,#6a625e 437.4px)"></div><div style="position:absolute;left:966px;top:0;width:14px;height:829px;background:linear-gradient(180deg,#506284 -16.1px,#5a6f94 116.0px,#62789e 206.2px,#6d87ae 259.4px,#7a95bd 300.4px,#8dabd5 341.0px,#a5c3e7 361.3px,#bcdaf4 381.6px,#d2effc 397.2px,#dcfbff 402.6px,#e8ffff 413.4px,#e6fbf8 419.8px,#c0d0cd 426.1px,#9aa3a0 431.4px,#736e6c 435.6px,#6a625e 437.6px)"></div><div style="position:absolute;left:980px;top:0;width:14px;height:829px;background:linear-gradient(180deg,#506284 -17.4px,#5a6f94 115.1px,#62789e 205.5px,#6d87ae 258.9px,#7a95bd 300.0px,#8dabd5 340.7px,#a5c3e7 361.0px,#bcdaf4 381.4px,#d2effc 397.0px,#dcfbff 402.5px,#e8ffff 413.3px,#e6fbf8 419.8px,#c0d0cd 426.2px,#9aa3a0 431.5px,#736e6c 435.7px,#6a625e 437.7px)"></div><div style="position:absolute;left:994px;top:0;width:14px;height:829px;background:linear-gradient(180deg,#506284 -18.7px,#5a6f94 114.2px,#62789e 204.8px,#6d87ae 258.4px,#7a95bd 299.6px,#8dabd5 340.3px,#a5c3e7 360.7px,#bcdaf4 381.1px,#d2effc 396.8px,#dcfbff 402.4px,#e8ffff 413.3px,#e6fbf8 419.8px,#c0d0cd 426.3px,#9aa3a0 431.6px,#736e6c 435.8px,#6a625e 437.8px)"></div><div style="position:absolute;left:1008px;top:0;width:14px;height:829px;background:linear-gradient(180deg,#506284 -20.2px,#5a6f94 113.1px,#62789e 204.1px,#6d87ae 257.8px,#7a95bd 299.1px,#8dabd5 340.0px,#a5c3e7 360.4px,#bcdaf4 380.9px,#d2effc 396.7px,#dcfbff 402.2px,#e8ffff 413.3px,#e6fbf8 419.9px,#c0d0cd 426.4px,#9aa3a0 431.7px,#736e6c 436.0px,#6a625e 438.0px)"></div><div style="position:absolute;left:1022px;top:0;width:14px;height:829px;background:linear-gradient(180deg,#506284 -21.7px,#5a6f94 112.1px,#62789e 203.3px,#6d87ae 257.2px,#7a95bd 298.7px,#8dabd5 339.6px,#a5c3e7 360.1px,#bcdaf4 380.6px,#d2effc 396.5px,#dcfbff 402.1px,#e8ffff 413.3px,#e6fbf8 419.9px,#c0d0cd 426.5px,#9aa3a0 431.9px,#736e6c 436.1px,#6a625e 438.1px)"></div><div style="position:absolute;left:1036px;top:0;width:14px;height:829px;background:linear-gradient(180deg,#506284 -23.3px,#5a6f94 110.9px,#62789e 202.5px,#6d87ae 256.6px,#7a95bd 298.2px,#8dabd5 339.2px,#a5c3e7 359.7px,#bcdaf4 380.3px,#d2effc 396.3px,#dcfbff 402.0px,#e8ffff 413.3px,#e6fbf8 420.0px,#c0d0cd 426.6px,#9aa3a0 432.0px,#736e6c 436.3px,#6a625e 438.3px)"></div><div style="position:absolute;left:1050px;top:0;width:14px;height:829px;background:linear-gradient(180deg,#506284 -25.0px,#5a6f94 109.7px,#62789e 201.6px,#6d87ae 255.9px,#7a95bd 297.7px,#8dabd5 338.8px,#a5c3e7 359.4px,#bcdaf4 380.0px,#d2effc 396.1px,#dcfbff 401.8px,#e8ffff 413.2px,#e6fbf8 420.0px,#c0d0cd 426.7px,#9aa3a0 432.2px,#736e6c 436.4px,#6a625e 438.4px)"></div><div style="position:absolute;left:1064px;top:0;width:14px;height:829px;background:linear-gradient(180deg,#506284 -26.7px,#5a6f94 108.5px,#62789e 200.7px,#6d87ae 255.3px,#7a95bd 297.2px,#8dabd5 338.4px,#a5c3e7 359.0px,#bcdaf4 379.7px,#d2effc 395.8px,#dcfbff 401.7px,#e8ffff 413.2px,#e6fbf8 420.1px,#c0d0cd 426.8px,#9aa3a0 432.3px,#736e6c 436.6px,#6a625e 438.6px)"></div><div style="position:absolute;left:1078px;top:0;width:14px;height:829px;background:linear-gradient(180deg,#506284 -28.5px,#5a6f94 107.2px,#62789e 199.8px,#6d87ae 254.5px,#7a95bd 296.6px,#8dabd5 338.0px,#a5c3e7 358.6px,#bcdaf4 379.4px,#d2effc 395.6px,#dcfbff 401.5px,#e8ffff 413.2px,#e6fbf8 420.1px,#c0d0cd 426.9px,#9aa3a0 432.5px,#736e6c 436.8px,#6a625e 438.8px)"></div><div style="position:absolute;left:1092px;top:0;width:14px;height:829px;background:linear-gradient(180deg,#506284 -30.4px,#5a6f94 105.9px,#62789e 198.9px,#6d87ae 253.8px,#7a95bd 296.1px,#8dabd5 337.5px,#a5c3e7 358.2px,#bcdaf4 379.0px,#d2effc 395.4px,#dcfbff 401.4px,#e8ffff 413.2px,#e6fbf8 420.1px,#c0d0cd 427.0px,#9aa3a0 432.6px,#736e6c 437.0px,#6a625e 439.0px)"></div><div style="position:absolute;left:1106px;top:0;width:14px;height:829px;background:linear-gradient(180deg,#506284 -32.4px,#5a6f94 104.5px,#62789e 197.9px,#6d87ae 253.0px,#7a95bd 295.5px,#8dabd5 337.1px,#a5c3e7 357.8px,#bcdaf4 378.7px,#d2effc 395.1px,#dcfbff 401.2px,#e8ffff 413.2px,#e6fbf8 420.2px,#c0d0cd 427.1px,#9aa3a0 432.8px,#736e6c 437.2px,#6a625e 439.2px)"></div><div style="position:absolute;left:1120px;top:0;width:14px;height:829px;background:linear-gradient(180deg,#506284 -34.5px,#5a6f94 103.0px,#62789e 196.8px,#6d87ae 252.2px,#7a95bd 294.9px,#8dabd5 336.6px,#a5c3e7 357.4px,#bcdaf4 378.3px,#d2effc 394.9px,#dcfbff 401.0px,#e8ffff 413.1px,#e6fbf8 420.3px,#c0d0cd 427.3px,#9aa3a0 433.0px,#736e6c 437.4px,#6a625e 439.4px)"></div><div style="position:absolute;left:1134px;top:0;width:14px;height:829px;background:linear-gradient(180deg,#506284 -36.6px,#5a6f94 101.5px,#62789e 195.7px,#6d87ae 251.4px,#7a95bd 294.2px,#8dabd5 336.0px,#a5c3e7 356.9px,#bcdaf4 377.9px,#d2effc 394.6px,#dcfbff 400.8px,#e8ffff 413.1px,#e6fbf8 420.3px,#c0d0cd 427.4px,#9aa3a0 433.1px,#736e6c 437.6px,#6a625e 439.6px)"></div><div style="position:absolute;left:1148px;top:0;width:14px;height:829px;background:linear-gradient(180deg,#506284 -38.8px,#5a6f94 100.0px,#62789e 194.6px,#6d87ae 250.6px,#7a95bd 293.6px,#8dabd5 335.5px,#a5c3e7 356.5px,#bcdaf4 377.5px,#d2effc 394.3px,#dcfbff 400.6px,#e8ffff 413.1px,#e6fbf8 420.4px,#c0d0cd 427.5px,#9aa3a0 433.3px,#736e6c 437.8px,#6a625e 439.8px)"></div><div style="position:absolute;left:1162px;top:0;width:14px;height:829px;background:linear-gradient(180deg,#506284 -41.1px,#5a6f94 98.4px,#62789e 193.5px,#6d87ae 249.7px,#7a95bd 292.9px,#8dabd5 335.0px,#a5c3e7 356.0px,#bcdaf4 377.1px,#d2effc 394.0px,#dcfbff 400.4px,#e8ffff 413.0px,#e6fbf8 420.4px,#c0d0cd 427.7px,#9aa3a0 433.5px,#736e6c 438.1px,#6a625e 440.1px)"></div><div style="position:absolute;left:1176px;top:0;width:14px;height:829px;background:linear-gradient(180deg,#506284 -43.4px,#5a6f94 96.7px,#62789e 192.3px,#6d87ae 248.8px,#7a95bd 292.2px,#8dabd5 334.4px,#a5c3e7 355.5px,#bcdaf4 376.7px,#d2effc 393.7px,#dcfbff 400.2px,#e8ffff 413.0px,#e6fbf8 420.5px,#c0d0cd 427.8px,#9aa3a0 433.7px,#736e6c 438.3px,#6a625e 440.3px)"></div><div style="position:absolute;left:1190px;top:0;width:14px;height:829px;background:linear-gradient(180deg,#506284 -45.8px,#5a6f94 95.0px,#62789e 191.1px,#6d87ae 247.8px,#7a95bd 291.5px,#8dabd5 333.8px,#a5c3e7 355.0px,#bcdaf4 376.3px,#d2effc 393.4px,#dcfbff 400.0px,#e8ffff 413.0px,#e6fbf8 420.5px,#c0d0cd 427.9px,#9aa3a0 433.9px,#736e6c 438.5px,#6a625e 440.5px)"></div><div style="position:absolute;left:1204px;top:0;width:14px;height:829px;background:linear-gradient(180deg,#506284 -48.3px,#5a6f94 93.2px,#62789e 189.8px,#6d87ae 246.8px,#7a95bd 290.7px,#8dabd5 333.2px,#a5c3e7 354.4px,#bcdaf4 375.8px,#d2effc 393.1px,#dcfbff 399.8px,#e8ffff 412.9px,#e6fbf8 420.6px,#c0d0cd 428.1px,#9aa3a0 434.1px,#736e6c 438.8px,#6a625e 440.8px)"></div><div style="position:absolute;left:1218px;top:0;width:14px;height:829px;background:linear-gradient(180deg,#506284 -50.9px,#5a6f94 91.4px,#62789e 188.5px,#6d87ae 245.8px,#7a95bd 290.0px,#8dabd5 332.6px,#a5c3e7 353.9px,#bcdaf4 375.4px,#d2effc 392.8px,#dcfbff 399.6px,#e8ffff 412.9px,#e6fbf8 420.7px,#c0d0cd 428.2px,#9aa3a0 434.4px,#736e6c 439.0px,#6a625e 441.0px)"></div><div style="position:absolute;left:1232px;top:0;width:14px;height:829px;background:linear-gradient(180deg,#506284 -53.6px,#5a6f94 89.5px,#62789e 187.1px,#6d87ae 244.8px,#7a95bd 289.2px,#8dabd5 332.0px,#a5c3e7 353.3px,#bcdaf4 374.9px,#d2effc 392.5px,#dcfbff 399.4px,#e8ffff 412.9px,#e6fbf8 420.7px,#c0d0cd 428.4px,#9aa3a0 434.6px,#736e6c 439.3px,#6a625e 441.3px)"></div><div style="position:absolute;left:1246px;top:0;width:14px;height:829px;background:linear-gradient(180deg,#506284 -56.3px,#5a6f94 87.6px,#62789e 185.8px,#6d87ae 243.8px,#7a95bd 288.4px,#8dabd5 331.3px,#a5c3e7 352.7px,#bcdaf4 374.4px,#d2effc 392.1px,#dcfbff 399.1px,#e8ffff 412.8px,#e6fbf8 420.8px,#c0d0cd 428.6px,#9aa3a0 434.8px,#736e6c 439.6px,#6a625e 441.6px)"></div><div style="position:absolute;left:1260px;top:0;width:14px;height:829px;background:linear-gradient(180deg,#506284 -59.1px,#5a6f94 85.6px,#62789e 184.3px,#6d87ae 242.7px,#7a95bd 287.5px,#8dabd5 330.7px,#a5c3e7 352.2px,#bcdaf4 373.9px,#d2effc 391.8px,#dcfbff 398.9px,#e8ffff 412.8px,#e6fbf8 420.9px,#c0d0cd 428.7px,#9aa3a0 435.1px,#736e6c 439.9px,#6a625e 441.9px)"></div><div style="position:absolute;left:1274px;top:0;width:14px;height:829px;background:linear-gradient(180deg,#506284 -62.0px,#5a6f94 83.6px,#62789e 182.9px,#6d87ae 241.5px,#7a95bd 286.7px,#8dabd5 330.0px,#a5c3e7 351.5px,#bcdaf4 373.4px,#d2effc 391.4px,#dcfbff 398.6px,#e8ffff 412.8px,#e6fbf8 421.0px,#c0d0cd 428.9px,#9aa3a0 435.3px,#736e6c 440.1px,#6a625e 442.1px)"></div><div style="position:absolute;left:1288px;top:0;width:14px;height:829px;background:linear-gradient(180deg,#506284 -64.9px,#5a6f94 81.5px,#62789e 181.4px,#6d87ae 240.4px,#7a95bd 285.8px,#8dabd5 329.3px,#a5c3e7 350.9px,#bcdaf4 372.8px,#d2effc 391.0px,#dcfbff 398.4px,#e8ffff 412.7px,#e6fbf8 421.0px,#c0d0cd 429.1px,#9aa3a0 435.5px,#736e6c 440.4px,#6a625e 442.4px)"></div><div style="position:absolute;left:1302px;top:0;width:14px;height:829px;background:linear-gradient(180deg,#506284 -68.0px,#5a6f94 79.3px,#62789e 179.8px,#6d87ae 239.2px,#7a95bd 284.9px,#8dabd5 328.5px,#a5c3e7 350.3px,#bcdaf4 372.3px,#d2effc 390.7px,#dcfbff 398.1px,#e8ffff 412.7px,#e6fbf8 421.1px,#c0d0cd 429.3px,#9aa3a0 435.8px,#736e6c 440.7px,#6a625e 442.7px)"></div><div style="position:absolute;left:1316px;top:0;width:14px;height:829px;background:linear-gradient(180deg,#506284 -71.1px,#5a6f94 77.2px,#62789e 178.3px,#6d87ae 238.0px,#7a95bd 284.0px,#8dabd5 327.8px,#a5c3e7 349.6px,#bcdaf4 371.7px,#d2effc 390.3px,#dcfbff 397.9px,#e8ffff 412.6px,#e6fbf8 421.2px,#c0d0cd 429.5px,#9aa3a0 436.1px,#736e6c 441.1px,#6a625e 443.1px)"></div><div style="position:absolute;left:1330px;top:0;width:14px;height:829px;background:linear-gradient(180deg,#506284 -74.2px,#5a6f94 74.9px,#62789e 176.7px,#6d87ae 236.8px,#7a95bd 283.0px,#8dabd5 327.0px,#a5c3e7 348.9px,#bcdaf4 371.2px,#d2effc 389.9px,#dcfbff 397.6px,#e8ffff 412.6px,#e6fbf8 421.3px,#c0d0cd 429.7px,#9aa3a0 436.3px,#736e6c 441.4px,#6a625e 443.4px)"></div><div style="position:absolute;left:1344px;top:0;width:14px;height:829px;background:linear-gradient(180deg,#506284 -77.5px,#5a6f94 72.6px,#62789e 175.0px,#6d87ae 235.5px,#7a95bd 282.1px,#8dabd5 326.2px,#a5c3e7 348.3px,#bcdaf4 370.6px,#d2effc 389.5px,#dcfbff 397.3px,#e8ffff 412.6px,#e6fbf8 421.4px,#c0d0cd 429.9px,#9aa3a0 436.6px,#736e6c 441.7px,#6a625e 443.7px)"></div><div style="position:absolute;left:1358px;top:0;width:14px;height:829px;background:linear-gradient(180deg,#506284 -80.8px,#5a6f94 70.3px,#62789e 173.3px,#6d87ae 234.2px,#7a95bd 281.1px,#8dabd5 325.4px,#a5c3e7 347.6px,#bcdaf4 370.0px,#d2effc 389.0px,#dcfbff 397.0px,#e8ffff 412.5px,#e6fbf8 421.5px,#c0d0cd 430.1px,#9aa3a0 436.9px,#736e6c 442.0px,#6a625e 444.0px)"></div><div style="position:absolute;left:1372px;top:0;width:14px;height:829px;background:linear-gradient(180deg,#506284 -84.2px,#5a6f94 67.9px,#62789e 171.6px,#6d87ae 232.9px,#7a95bd 280.1px,#8dabd5 324.6px,#a5c3e7 346.8px,#bcdaf4 369.4px,#d2effc 388.6px,#dcfbff 396.7px,#e8ffff 412.5px,#e6fbf8 421.5px,#c0d0cd 430.3px,#9aa3a0 437.2px,#736e6c 442.4px,#6a625e 444.4px)"></div><div style="position:absolute;left:1386px;top:0;width:14px;height:829px;background:linear-gradient(180deg,#506284 -87.7px,#5a6f94 65.4px,#62789e 169.8px,#6d87ae 231.5px,#7a95bd 279.0px,#8dabd5 323.8px,#a5c3e7 346.1px,#bcdaf4 368.8px,#d2effc 388.2px,#dcfbff 396.4px,#e8ffff 412.4px,#e6fbf8 421.6px,#c0d0cd 430.5px,#9aa3a0 437.5px,#736e6c 442.7px,#6a625e 444.7px)"></div><div style="position:absolute;left:1400px;top:0;width:14px;height:829px;background:linear-gradient(180deg,#506284 -91.3px,#5a6f94 62.9px,#62789e 168.0px,#6d87ae 230.2px,#7a95bd 278.0px,#8dabd5 322.9px,#a5c3e7 345.3px,#bcdaf4 368.1px,#d2effc 387.7px,#dcfbff 396.1px,#e8ffff 412.4px,#e6fbf8 421.7px,#c0d0cd 430.7px,#9aa3a0 437.8px,#736e6c 443.1px,#6a625e 445.1px)"></div><div style="position:absolute;left:1414px;top:0;width:14px;height:829px;background:linear-gradient(180deg,#506284 -94.9px,#5a6f94 60.3px,#62789e 166.2px,#6d87ae 228.8px,#7a95bd 276.9px,#8dabd5 322.1px,#a5c3e7 344.6px,#bcdaf4 367.5px,#d2effc 387.3px,#dcfbff 395.8px,#e8ffff 412.3px,#e6fbf8 421.8px,#c0d0cd 430.9px,#9aa3a0 438.1px,#736e6c 443.4px,#6a625e 445.4px)"></div><div style="position:absolute;left:1428px;top:0;width:14px;height:829px;background:linear-gradient(180deg,#506284 -98.6px,#5a6f94 57.7px,#62789e 164.3px,#6d87ae 227.3px,#7a95bd 275.8px,#8dabd5 321.2px,#a5c3e7 343.8px,#bcdaf4 366.8px,#d2effc 386.8px,#dcfbff 395.5px,#e8ffff 412.3px,#e6fbf8 421.9px,#c0d0cd 431.1px,#9aa3a0 438.4px,#736e6c 443.8px,#6a625e 445.8px)"></div><div style="position:absolute;left:1442px;top:0;width:14px;height:829px;background:linear-gradient(180deg,#506284 -102.4px,#5a6f94 55.0px,#62789e 162.4px,#6d87ae 225.8px,#7a95bd 274.7px,#8dabd5 320.3px,#a5c3e7 343.0px,#bcdaf4 366.1px,#d2effc 386.3px,#dcfbff 395.2px,#e8ffff 412.2px,#e6fbf8 422.0px,#c0d0cd 431.4px,#9aa3a0 438.7px,#736e6c 444.2px,#6a625e 446.2px)"></div><div style="position:absolute;left:1456px;top:0;width:14px;height:829px;background:linear-gradient(180deg,#506284 -106.2px,#5a6f94 52.3px,#62789e 160.4px,#6d87ae 224.3px,#7a95bd 273.5px,#8dabd5 319.4px,#a5c3e7 342.2px,#bcdaf4 365.4px,#d2effc 385.8px,#dcfbff 394.8px,#e8ffff 412.2px,#e6fbf8 422.1px,#c0d0cd 431.6px,#9aa3a0 439.1px,#736e6c 444.6px,#6a625e 446.6px)"></div><div style="position:absolute;left:1470px;top:0;width:7px;height:829px;background:linear-gradient(180deg,#506284 -109.2px,#5a6f94 50.2px,#62789e 159.0px,#6d87ae 223.2px,#7a95bd 272.6px,#8dabd5 318.7px,#a5c3e7 341.6px,#bcdaf4 364.9px,#d2effc 385.5px,#dcfbff 394.6px,#e8ffff 412.2px,#e6fbf8 422.2px,#c0d0cd 431.8px,#9aa3a0 439.3px,#736e6c 444.9px,#6a625e 446.9px)"></div><div style="position:absolute;left:11px;top:0;width:1px;height:829px;background:rgba(150,150,150,0.216)"></div><div style="position:absolute;left:12px;top:0;width:1px;height:829px;background:rgba(150,150,150,0.024)"></div><div style="position:absolute;left:84px;top:0;width:1px;height:829px;background:rgba(150,150,150,0.168)"></div><div style="position:absolute;left:85px;top:0;width:1px;height:829px;background:rgba(150,150,150,0.072)"></div><div style="position:absolute;left:157px;top:0;width:1px;height:829px;background:rgba(150,150,150,0.120)"></div><div style="position:absolute;left:158px;top:0;width:1px;height:829px;background:rgba(150,150,150,0.120)"></div><div style="position:absolute;left:230px;top:0;width:1px;height:829px;background:rgba(150,150,150,0.072)"></div><div style="position:absolute;left:231px;top:0;width:1px;height:829px;background:rgba(150,150,150,0.168)"></div><div style="position:absolute;left:303px;top:0;width:1px;height:829px;background:rgba(150,150,150,0.024)"></div><div style="position:absolute;left:304px;top:0;width:1px;height:829px;background:rgba(150,150,150,0.216)"></div><div style="position:absolute;left:377px;top:0;width:1px;height:829px;background:rgba(205,205,205,0.324)"></div><div style="position:absolute;left:378px;top:0;width:1px;height:829px;background:rgba(205,205,205,0.036)"></div><div style="position:absolute;left:450px;top:0;width:1px;height:829px;background:rgba(150,150,150,0.168)"></div><div style="position:absolute;left:451px;top:0;width:1px;height:829px;background:rgba(150,150,150,0.072)"></div><div style="position:absolute;left:523px;top:0;width:1px;height:829px;background:rgba(150,150,150,0.120)"></div><div style="position:absolute;left:524px;top:0;width:1px;height:829px;background:rgba(150,150,150,0.120)"></div><div style="position:absolute;left:596px;top:0;width:1px;height:829px;background:rgba(150,150,150,0.072)"></div><div style="position:absolute;left:597px;top:0;width:1px;height:829px;background:rgba(150,150,150,0.168)"></div><div style="position:absolute;left:669px;top:0;width:1px;height:829px;background:rgba(150,150,150,0.024)"></div><div style="position:absolute;left:670px;top:0;width:1px;height:829px;background:rgba(150,150,150,0.216)"></div><div style="position:absolute;left:743px;top:0;width:1px;height:829px;background:rgba(150,150,150,0.216)"></div><div style="position:absolute;left:744px;top:0;width:1px;height:829px;background:rgba(150,150,150,0.024)"></div><div style="position:absolute;left:816px;top:0;width:1px;height:829px;background:rgba(150,150,150,0.168)"></div><div style="position:absolute;left:817px;top:0;width:1px;height:829px;background:rgba(150,150,150,0.072)"></div><div style="position:absolute;left:889px;top:0;width:1px;height:829px;background:rgba(150,150,150,0.120)"></div><div style="position:absolute;left:890px;top:0;width:1px;height:829px;background:rgba(150,150,150,0.120)"></div><div style="position:absolute;left:962px;top:0;width:1px;height:829px;background:rgba(150,150,150,0.072)"></div><div style="position:absolute;left:963px;top:0;width:1px;height:829px;background:rgba(150,150,150,0.168)"></div><div style="position:absolute;left:1035px;top:0;width:1px;height:829px;background:rgba(150,150,150,0.024)"></div><div style="position:absolute;left:1036px;top:0;width:1px;height:829px;background:rgba(150,150,150,0.216)"></div><div style="position:absolute;left:1109px;top:0;width:1px;height:829px;background:rgba(150,150,150,0.216)"></div><div style="position:absolute;left:1110px;top:0;width:1px;height:829px;background:rgba(150,150,150,0.024)"></div><div style="position:absolute;left:1182px;top:0;width:1px;height:829px;background:rgba(150,150,150,0.168)"></div><div style="position:absolute;left:1183px;top:0;width:1px;height:829px;background:rgba(150,150,150,0.072)"></div><div style="position:absolute;left:1255px;top:0;width:1px;height:829px;background:rgba(150,150,150,0.120)"></div><div style="position:absolute;left:1256px;top:0;width:1px;height:829px;background:rgba(150,150,150,0.120)"></div><div style="position:absolute;left:1328px;top:0;width:1px;height:829px;background:rgba(150,150,150,0.072)"></div><div style="position:absolute;left:1329px;top:0;width:1px;height:829px;background:rgba(150,150,150,0.168)"></div><div style="position:absolute;left:1401px;top:0;width:1px;height:829px;background:rgba(150,150,150,0.024)"></div><div style="position:absolute;left:1402px;top:0;width:1px;height:829px;background:rgba(150,150,150,0.216)"></div><div style="position:absolute;left:1475px;top:0;width:1px;height:829px;background:rgba(150,150,150,0.216)"></div><div style="position:absolute;left:1476px;top:0;width:1px;height:829px;background:rgba(150,150,150,0.024)"></div><div style="position:absolute;left:0;top:32px;width:1477px;height:1px;background:rgba(150,150,150,0.024)"></div><div style="position:absolute;left:0;top:33px;width:1477px;height:1px;background:rgba(150,150,150,0.216)"></div><div style="position:absolute;left:0;top:106px;width:1477px;height:1px;background:rgba(150,150,150,0.214)"></div><div style="position:absolute;left:0;top:107px;width:1477px;height:1px;background:rgba(150,150,150,0.026)"></div><div style="position:absolute;left:0;top:179px;width:1477px;height:1px;background:rgba(150,150,150,0.163)"></div><div style="position:absolute;left:0;top:180px;width:1477px;height:1px;background:rgba(150,150,150,0.077)"></div><div style="position:absolute;left:0;top:252px;width:1477px;height:1px;background:rgba(150,150,150,0.113)"></div><div style="position:absolute;left:0;top:253px;width:1477px;height:1px;background:rgba(150,150,150,0.127)"></div><div style="position:absolute;left:0;top:325px;width:1477px;height:1px;background:rgba(150,150,150,0.062)"></div><div style="position:absolute;left:0;top:326px;width:1477px;height:1px;background:rgba(150,150,150,0.178)"></div><div style="position:absolute;left:0;top:398px;width:1477px;height:1px;background:rgba(150,150,150,0.012)"></div><div style="position:absolute;left:0;top:399px;width:1477px;height:1px;background:rgba(150,150,150,0.228)"></div><div style="position:absolute;left:0;top:472px;width:1477px;height:1px;background:rgba(150,150,150,0.202)"></div><div style="position:absolute;left:0;top:473px;width:1477px;height:1px;background:rgba(150,150,150,0.038)"></div><div style="position:absolute;left:0;top:545px;width:1477px;height:1px;background:rgba(150,150,150,0.151)"></div><div style="position:absolute;left:0;top:546px;width:1477px;height:1px;background:rgba(150,150,150,0.089)"></div><div style="position:absolute;left:0;top:618px;width:1477px;height:1px;background:rgba(205,205,205,0.151)"></div><div style="position:absolute;left:0;top:619px;width:1477px;height:1px;background:rgba(205,205,205,0.209)"></div><div style="position:absolute;left:0;top:691px;width:1477px;height:1px;background:rgba(150,150,150,0.050)"></div><div style="position:absolute;left:0;top:692px;width:1477px;height:1px;background:rgba(150,150,150,0.190)"></div><div style="position:absolute;left:0;top:765px;width:1477px;height:1px;background:rgba(150,150,150,0.240)"></div></div>
<div style="left:716px;top:386px;width:723px;height:2px;background:#e8e8e8;"></div>
<div style="left:716px;top:796px;width:723px;height:2px;background:#e8e8e8;"></div>
<div style="left:716px;top:386px;width:2px;height:412px;background:#e8e8e8;"></div>
<div style="left:1437px;top:386px;width:2px;height:412px;background:#e8e8e8;"></div>
<svg style="left:708px;top:378px;" width="18" height="18" viewBox="0 0 18 18"><defs><linearGradient id="hg" x1="0" y1="0" x2="0" y2="1"><stop offset="0" stop-color="#9cc4ff"/><stop offset="0.45" stop-color="#3b86f0"/><stop offset="1" stop-color="#0b5fe0"/></linearGradient></defs><circle cx="9" cy="9" r="7" fill="url(#hg)" stroke="#1b2330" stroke-width="1.6"/></svg>
<svg style="left:1429px;top:378px;" width="18" height="18" viewBox="0 0 18 18"><defs><linearGradient id="hg" x1="0" y1="0" x2="0" y2="1"><stop offset="0" stop-color="#9cc4ff"/><stop offset="0.45" stop-color="#3b86f0"/><stop offset="1" stop-color="#0b5fe0"/></linearGradient></defs><circle cx="9" cy="9" r="7" fill="url(#hg)" stroke="#1b2330" stroke-width="1.6"/></svg>
<svg style="left:708px;top:788px;" width="18" height="18" viewBox="0 0 18 18"><defs><linearGradient id="hg" x1="0" y1="0" x2="0" y2="1"><stop offset="0" stop-color="#9cc4ff"/><stop offset="0.45" stop-color="#3b86f0"/><stop offset="1" stop-color="#0b5fe0"/></linearGradient></defs><circle cx="9" cy="9" r="7" fill="url(#hg)" stroke="#1b2330" stroke-width="1.6"/></svg>
<svg style="left:1429px;top:788px;" width="18" height="18" viewBox="0 0 18 18"><defs><linearGradient id="hg" x1="0" y1="0" x2="0" y2="1"><stop offset="0" stop-color="#9cc4ff"/><stop offset="0.45" stop-color="#3b86f0"/><stop offset="1" stop-color="#0b5fe0"/></linearGradient></defs><circle cx="9" cy="9" r="7" fill="url(#hg)" stroke="#1b2330" stroke-width="1.6"/></svg>
<svg style="left:1066px;top:582px;" width="23" height="23" viewBox="0 0 23 23"><defs><linearGradient id="rg" x1="0" y1="0" x2="0" y2="1"><stop offset="0" stop-color="#b6d8fb"/><stop offset="1" stop-color="#6a9de2"/></linearGradient></defs><circle cx="11.5" cy="11.5" r="7.8" fill="none" stroke="#8a9a9a" stroke-opacity="0.45" stroke-width="5.4"/><circle cx="11.5" cy="11.5" r="7.8" fill="none" stroke="url(#rg)" stroke-width="4.2"/></svg>
<div style="left:343px;top:181px;width:58px;height:220px;background:#10151e;border-radius:6px"></div>
<div style="left:360px;top:189px;width:24px;height:2px;background:#6f737a;"></div>
<div style="left:360px;top:194px;width:24px;height:2px;background:#6f737a;"></div>
<div style="left:348px;top:207px;width:48px;height:30px;background:#5a5a5a;border-radius:5px 5px 0 0"></div>
<div style="left:348px;top:239px;width:48px;height:30px;background:#5a5a5a;border-radius:0"></div>
<div style="left:348px;top:271px;width:48px;height:30px;background:#5a5a5a;border-radius:0"></div>
<div style="left:348px;top:303px;width:48px;height:30px;background:#5a5a5a;border-radius:0"></div>
<div style="left:348px;top:335px;width:48px;height:30px;background:#46607c;border-radius:0"></div>
<div style="left:348px;top:367px;width:48px;height:30px;background:#5a5a5a;border-radius:0 0 5px 5px"></div>
<svg style="left:361px;top:210px;" width="22" height="23" viewBox="0 0 22 23"><g stroke="#c8c8c8" stroke-width="2.8" stroke-linecap="round"><path d="M1.8 10L6.5 17M6 2.2L7.8 12M11.2 1.2V11M16 2.2L14.8 12M20 7L17.5 14"/></g><path d="M5.5 10.5L17 10.5L19 13.5L15.5 22H7L3.5 14Z" fill="#c8c8c8"/></svg>
<svg style="left:360px;top:241px;" width="24" height="26" viewBox="0 0 24 26"><g stroke="#c8c8c8" stroke-width="1.6" fill="none"><path d="M12 2V24M1 13H23"/><path d="M8.5 5.5L12 2L15.5 5.5M8.5 20.5L12 24L15.5 20.5M4.5 9.5L1 13L4.5 16.5M19.5 9.5L23 13L19.5 16.5"/></g></svg>
<svg style="left:361px;top:273px;" width="22" height="26" viewBox="0 0 22 26"><g stroke="#c8c8c8" stroke-width="1.6" fill="none"><path d="M9 4A9 9 0 0 0 9 22"/><path d="M13 22A9 9 0 0 0 13 4"/><path d="M13 3V8M13 3H18M9 23V18M9 23H4"/></g></svg>
<svg style="left:361px;top:307px;" width="22" height="22" viewBox="0 0 22 22"><g stroke="#c8c8c8" stroke-width="1.6" fill="none"><rect x="1" y="1" width="20" height="20"/><path d="M1 14H8V21M9 13L17 5M11 5H17V11"/></g></svg>
<svg style="left:359px;top:338px;" width="26" height="24" viewBox="0 0 26 24"><g fill="#f0f0f0"><rect x="1" y="1" width="4" height="4"/><rect x="21" y="1" width="4" height="4"/><rect x="1" y="19" width="4" height="4"/><rect x="21" y="19" width="4" height="4"/></g><g stroke="#f0f0f0" stroke-width="1.6"><path d="M7 3H19M7 21H19M3 7V17M23 7V17"/></g></svg>
<svg style="left:359px;top:369px;" width="26" height="26" viewBox="0 0 26 26"><g stroke="#c8c8c8" stroke-width="1.6" fill="none"><path d="M6 8A9 9 0 0 1 20 8M20 18A9 9 0 0 1 6 18M4.5 11A9 9 0 0 0 4.5 15M21.5 11A9 9 0 0 1 21.5 15"/><path d="M13 5V21M5 13H21M10.5 7.5L13 5L15.5 7.5M10.5 18.5L13 21L15.5 18.5M7.5 10.5L5 13L7.5 15.5M18.5 10.5L21 13L18.5 15.5"/></g><path d="M21 1H25V5Z M1 25V21L5 25Z" fill="#c8c8c8"/></svg>
<svg style="left:4px;top:5px;" width="22" height="24" viewBox="0 0 22 24"><path d="M11 1L21 6.5V17.5L11 23L1 17.5V6.5Z" fill="#4a4a4a" stroke="#2a2a2a" stroke-width="1"/><path d="M11 5L17 8.5V15.5L11 19L5 15.5V8.5Z" fill="none" stroke="#fff" stroke-width="2.2" stroke-linejoin="round"/><path d="M5 8.5L11 12L17 8.5M11 12V19" fill="none" stroke="#fff" stroke-width="2.2"/></svg>
<div class="t" style="left:31px;top:8.76px;font-size:18px;color:#111;font-weight:400;letter-spacing:-0.28px;">FPS - SampleScene - WebGL - Unity 2022.3.52f1c1* &lt;DX11&gt;</div>
<svg style="left:2054px;top:15px;" width="19" height="3" viewBox="0 0 19 3"><path d="M1 1.5H18" stroke="#111" stroke-width="1.2"/></svg>
<svg style="left:2123px;top:7px;" width="20" height="20" viewBox="0 0 20 20"><rect x="2" y="5" width="12" height="13" rx="2" fill="none" stroke="#111" stroke-width="1.3"/><path d="M5 2.5H15A3 3 0 0 1 18 5.5V15" fill="none" stroke="#111" stroke-width="1.3"/></svg>
<svg style="left:2194px;top:7px;" width="20" height="20" viewBox="0 0 20 20"><path d="M2 2L18 18M18 2L2 18" stroke="#111" stroke-width="1.3"/></svg>
<div class="t" style="left:12px;top:38.42px;font-size:19px;color:#0a0a0a;font-weight:400;letter-spacing:0.05px;">File</div>
<div class="t" style="left:63px;top:38.42px;font-size:19px;color:#0a0a0a;font-weight:400;letter-spacing:0.05px;">Edit</div>
<div class="t" style="left:119px;top:38.42px;font-size:19px;color:#0a0a0a;font-weight:400;letter-spacing:0.05px;">Assets</div>
<div class="t" style="left:195px;top:38.42px;font-size:19px;color:#0a0a0a;font-weight:400;letter-spacing:0.05px;">GameObject</div>
<div class="t" style="left:325px;top:38.42px;font-size:19px;color:#0a0a0a;font-weight:400;letter-spacing:0.05px;">Component</div>
<div class="t" style="left:449px;top:38.42px;font-size:19px;color:#0a0a0a;font-weight:400;letter-spacing:0.05px;">Services</div>
<div class="t" style="left:539px;top:38.42px;font-size:19px;color:#0a0a0a;font-weight:400;letter-spacing:0.05px;">Jobs</div>
<div class="t" style="left:599px;top:38.42px;font-size:19px;color:#0a0a0a;font-weight:400;letter-spacing:0.05px;">Window</div>
<div class="t" style="left:692px;top:38.42px;font-size:19px;color:#0a0a0a;font-weight:400;letter-spacing:0.05px;">Help</div>
<div style="left:11px;top:73px;width:75px;height:28px;background:#383838;border-radius:4px"></div>
<svg style="left:19px;top:78px;" width="19" height="19" viewBox="0 0 19 19"><circle cx="9.5" cy="9.5" r="9" fill="#c4c4c4"/><circle cx="9.5" cy="6.5" r="3" fill="#383838"/><path d="M3.5 14.5C5 11.5 14 11.5 15.5 14.5C14 16.5 5 16.5 3.5 14.5Z" fill="#383838"/></svg>
<div class="t" style="left:50px;top:77.76px;font-size:18px;color:#c4c4c4;font-weight:400;letter-spacing:0px;">L</div>
<svg style="left:70px;top:84px;" width="11" height="7" viewBox="0 0 11 7"><path d="M0 0H11L5.5 7Z" fill="#c4c4c4"/></svg>
<div style="left:92px;top:73px;width:46px;height:28px;background:#383838;border-radius:4px"></div>
<svg style="left:104px;top:79px;" width="22" height="16" viewBox="0 0 22 16"><path d="M5 15.5A4.5 4.5 0 0 1 4.5 6.8A6.5 6.5 0 0 1 16.8 6A4.8 4.8 0 0 1 17 15.5Z" fill="#c4c4c4"/></svg>
<div style="left:144px;top:74px;width:44px;height:29px;background:#383838;border-radius:4px"></div>
<svg style="left:154px;top:79px;" width="22" height="18" viewBox="0 0 22 18"><g fill="none" stroke="#c4c4c4" stroke-width="1.5"><circle cx="3.5" cy="3.5" r="2.5"/><circle cx="17.5" cy="3.5" r="2.5"/><circle cx="17.5" cy="14.5" r="2.5"/><path d="M6 3.5H15M9 3.5C12 3.5 12 14.5 15 14.5"/></g></svg>
<div style="left:1049px;top:74px;width:46px;height:26px;background:#383838;"></div>
<div style="left:1097px;top:74px;width:46px;height:26px;background:#383838;"></div>
<div style="left:1145px;top:74px;width:46px;height:26px;background:#2b2b2b;"></div>
<svg style="left:1066px;top:80px;" width="13" height="15" viewBox="0 0 13 15"><path d="M0 0V15L13 7.5Z" fill="#c4c4c4"/></svg>
<div style="left:1114px;top:80px;width:5px;height:14px;background:#c4c4c4;border-radius:1px"></div>
<div style="left:1122px;top:80px;width:5px;height:14px;background:#c4c4c4;border-radius:1px"></div>
<svg style="left:1160px;top:80px;" width="16" height="15" viewBox="0 0 16 15"><path d="M0 0V15L10 7.5Z" fill="#9a9a9a"/><rect x="12.5" y="0" width="2.5" height="15" rx="1" fill="#9a9a9a"/></svg>
<div style="left:1881px;top:73px;width:46px;height:28px;background:#383838;border-radius:4px"></div>
<svg style="left:1895px;top:78px;" width="19" height="19" viewBox="0 0 19 19"><g fill="none" stroke="#c4c4c4" stroke-width="1.8"><path d="M3.2 6.5A7.5 7.5 0 1 1 2.2 10"/><path d="M9.5 5.5V10L12.5 12"/></g><path d="M0.5 4L5.5 3.5L5 8.5Z" fill="#c4c4c4"/></svg>
<div style="left:1933px;top:73px;width:46px;height:28px;background:#383838;border-radius:4px"></div>
<svg style="left:1946px;top:78px;" width="20" height="20" viewBox="0 0 20 20"><circle cx="8" cy="8" r="6" fill="none" stroke="#c4c4c4" stroke-width="1.7"/><path d="M12.5 12.5L18 18" stroke="#c4c4c4" stroke-width="2.5"/></svg>
<div style="left:1985px;top:73px;width:118px;height:28px;background:#383838;border-radius:4px"></div>
<div class="t" style="left:1991px;top:77.42px;font-size:19px;color:#c4c4c4;font-weight:400;letter-spacing:0.35px;">Layers</div>
<svg style="left:2087px;top:84px;" width="11" height="7" viewBox="0 0 11 7"><path d="M0 0H11L5.5 7Z" fill="#c4c4c4"/></svg>
<div style="left:2109px;top:73px;width:118px;height:28px;background:#383838;border-radius:4px"></div>
<div class="t" style="left:2115px;top:77.42px;font-size:19px;color:#c4c4c4;font-weight:400;letter-spacing:0.35px;">Layout</div>
<svg style="left:2211px;top:84px;" width="11" height="7" viewBox="0 0 11 7"><path d="M0 0H11L5.5 7Z" fill="#c4c4c4"/></svg>
<svg style="left:11px;top:117px;" width="16" height="13" viewBox="0 0 16 13"><g fill="#c4c4c4"><circle cx="1.5" cy="1.5" r="1.3"/><circle cx="4.5" cy="6.5" r="1.3"/><circle cx="4.5" cy="11.5" r="1.3"/><rect x="4" y="0.8" width="12" height="1.4"/><rect x="7.5" y="5.8" width="8.5" height="1.4"/><rect x="7.5" y="10.8" width="8.5" height="1.4"/></g></svg>
<div class="t" style="left:34.5px;top:114.92px;font-size:19px;color:#d2d2d2;font-weight:400;letter-spacing:0.3px;">Hierarchy</div>
<svg style="left:284px;top:116px;" width="14" height="16" viewBox="0 0 14 16"><rect x="1" y="8" width="12" height="7" rx="1" fill="none" stroke="#c4c4c4" stroke-width="2"/><path d="M4 8V5a3 3 0 0 1 6 0v0.5" fill="none" stroke="#c4c4c4" stroke-width="2"/></svg>
<svg style="left:313px;top:116px;" width="6" height="16" viewBox="0 0 6 16"><circle cx="3" cy="2.5" r="1.9" fill="#c4c4c4"/><circle cx="3" cy="8" r="1.9" fill="#c4c4c4"/><circle cx="3" cy="13.5" r="1.9" fill="#c4c4c4"/></svg>
<svg style="left:10px;top:144px;" width="18" height="18" viewBox="0 0 18 18"><path d="M9 0V18M0 9H18" stroke="#c4c4c4" stroke-width="2.2"/></svg>
<svg style="left:35px;top:151px;" width="10" height="6" viewBox="0 0 10 6"><path d="M0 0H10L5.0 6Z" fill="#c4c4c4"/></svg>
<div style="left:64px;top:141px;width:240px;height:24px;background:#2a2a2a;border-radius:6px 0 0 6px;border-top:1.5px solid #111"></div>
<div style="left:304px;top:141px;width:30px;height:24px;background:#2a2a2a;border-radius:0 6px 6px 0;border-top:1.5px solid #111;border-left:1px solid #3a3a3a"></div>
<svg style="left:71px;top:149px;" width="14" height="12" viewBox="0 0 14 12"><circle cx="4.5" cy="4.5" r="3.5" fill="none" stroke="#c4c4c4" stroke-width="1.3"/><path d="M7 7L10.5 10.5" stroke="#c4c4c4" stroke-width="1.6"/><path d="M9 2.5H13L11 5Z" fill="#c4c4c4"/></svg>
<div class="t" style="left:93.5px;top:142.42px;font-size:19px;color:#7f7f7f;font-weight:400;letter-spacing:0.3px;">All</div>
<svg style="left:310px;top:143px;" width="20" height="20" viewBox="0 0 20 20"><g fill="none" stroke="#c4c4c4" stroke-width="1.3"><rect x="6.5" y="1.5" width="12" height="12" rx="2"/><rect x="1.5" y="12.5" width="6" height="6"/><path d="M7.5 12.5L15 5M10.5 5H15V9.5"/></g></svg>
<svg style="left:51px;top:177px;" width="13" height="11" viewBox="0 0 13 11"><path d="M0 0H13L6.5 11Z" fill="#7a7a7a"/></svg>
<svg style="left:72px;top:171px;" width="19" height="22" viewBox="0 0 19 22"><path d="M9.5 0.5L18.5 5.5V16.5L9.5 21.5L0.5 16.5V5.5Z" fill="#e6e6e6"/><rect x="8.4" y="0" width="2.2" height="5.2" fill="#262626"/><path d="M5.3 6.3L9.5 4.2L13.7 6.3L9.5 8.6Z" fill="#262626"/><path d="M3.4 8.9L7.9 11.3V16.5L3.4 14Z" fill="#262626"/><path d="M15.6 8.9L11.1 11.3V16.5L15.6 14Z" fill="#262626"/><path d="M0 14.8L3.6 13.4M19 14.8L15.4 13.4" stroke="#262626" stroke-width="1.4"/></svg>
<div class="t" style="left:97px;top:170.92px;font-size:19px;color:#e0e0e0;font-weight:700;letter-spacing:0.3px;">SampleScene*</div>
<svg style="left:314px;top:173px;" width="6" height="16" viewBox="0 0 6 16"><circle cx="3" cy="2.5" r="1.9" fill="#c4c4c4"/><circle cx="3" cy="8" r="1.9" fill="#c4c4c4"/><circle cx="3" cy="13.5" r="1.9" fill="#c4c4c4"/></svg>
<svg style="left:72px;top:203px;" width="13" height="11" viewBox="0 0 13 11"><path d="M0 0H13L6.5 11Z" fill="#7a7a7a"/></svg>
<svg style="left:92px;top:196px;" width="20" height="20" viewBox="0 0 20 20"><g fill="none" stroke="#c8c8c8" stroke-width="1.5" stroke-linejoin="round"><path d="M10 1.5L18 5.5V14.5L10 18.5L2 14.5V5.5Z"/><path d="M2 5.5L10 9.5L18 5.5M10 9.5V18.5"/></g></svg>
<div class="t" style="left:117px;top:194.92px;font-size:19px;color:#c4c4c4;font-weight:400;letter-spacing:0.45px;">Enviroment</div>
<div style="left:48px;top:219px;width:3px;height:21px;background:#1b8fd6;"></div>
<svg style="left:112px;top:219px;" width="21" height="22" viewBox="0 0 21 22"><path d="M10.5 1L20 5.8V16.2L10.5 21L1 16.2V5.8Z" fill="#d9d9d9"/><path d="M10.5 10.2L20 5.8V16.2L10.5 21Z" fill="#6fd3fb"/><path d="M1 5.8L10.5 1L20 5.8L10.5 10.2Z" fill="#9fe2ff"/><path d="M5 3.5L14.8 8.2V12" stroke="#3a9ccc" stroke-width="1.4" fill="none"/><path d="M3.5 11V15" stroke="#8a8a8a" stroke-width="1.5"/></svg>
<div class="t" style="left:138px;top:218.92px;font-size:19px;color:#7cb4f8;font-weight:400;letter-spacing:-0.25px;">PTK_Cuboid_5</div>
<div style="left:48px;top:243px;width:3px;height:21px;background:#1b8fd6;"></div>
<svg style="left:112px;top:243px;" width="21" height="22" viewBox="0 0 21 22"><path d="M10.5 1L20 5.8V16.2L10.5 21L1 16.2V5.8Z" fill="#d9d9d9"/><path d="M10.5 10.2L20 5.8V16.2L10.5 21Z" fill="#6fd3fb"/><path d="M1 5.8L10.5 1L20 5.8L10.5 10.2Z" fill="#9fe2ff"/><path d="M5 3.5L14.8 8.2V12" stroke="#3a9ccc" stroke-width="1.4" fill="none"/><path d="M3.5 11V15" stroke="#8a8a8a" stroke-width="1.5"/></svg>
<div class="t" style="left:138px;top:242.92px;font-size:19px;color:#7cb4f8;font-weight:400;letter-spacing:-0.25px;">PTK_Cube_1</div>
<div style="left:48px;top:267px;width:3px;height:21px;background:#1b8fd6;"></div>
<svg style="left:112px;top:267px;" width="21" height="22" viewBox="0 0 21 22"><path d="M10.5 1L20 5.8V16.2L10.5 21L1 16.2V5.8Z" fill="#d9d9d9"/><path d="M10.5 10.2L20 5.8V16.2L10.5 21Z" fill="#6fd3fb"/><path d="M1 5.8L10.5 1L20 5.8L10.5 10.2Z" fill="#9fe2ff"/><path d="M5 3.5L14.8 8.2V12" stroke="#3a9ccc" stroke-width="1.4" fill="none"/><path d="M3.5 11V15" stroke="#8a8a8a" stroke-width="1.5"/></svg>
<div class="t" style="left:138px;top:266.92px;font-size:19px;color:#7cb4f8;font-weight:400;letter-spacing:-0.25px;">PTK_Cube_1 (1)</div>
<div style="left:48px;top:291px;width:3px;height:21px;background:#1b8fd6;"></div>
<svg style="left:112px;top:291px;" width="21" height="22" viewBox="0 0 21 22"><path d="M10.5 1L20 5.8V16.2L10.5 21L1 16.2V5.8Z" fill="#d9d9d9"/><path d="M10.5 10.2L20 5.8V16.2L10.5 21Z" fill="#6fd3fb"/><path d="M1 5.8L10.5 1L20 5.8L10.5 10.2Z" fill="#9fe2ff"/><path d="M5 3.5L14.8 8.2V12" stroke="#3a9ccc" stroke-width="1.4" fill="none"/><path d="M3.5 11V15" stroke="#8a8a8a" stroke-width="1.5"/></svg>
<div class="t" style="left:138px;top:290.92px;font-size:19px;color:#7cb4f8;font-weight:400;letter-spacing:-0.25px;">PTK_Cube_1 (2)</div>
<svg style="left:113px;top:316px;" width="20" height="20" viewBox="0 0 20 20"><g fill="none" stroke="#c8c8c8" stroke-width="1.5" stroke-linejoin="round"><path d="M10 1.5L18 5.5V14.5L10 18.5L2 14.5V5.5Z"/><path d="M2 5.5L10 9.5L18 5.5M10 9.5V18.5"/></g></svg>
<div class="t" style="left:138px;top:314.92px;font-size:19px;color:#c4c4c4;font-weight:400;letter-spacing:0.45px;">Directional Light</div>
<svg style="left:92px;top:340px;" width="20" height="20" viewBox="0 0 20 20"><g fill="none" stroke="#c8c8c8" stroke-width="1.5" stroke-linejoin="round"><path d="M10 1.5L18 5.5V14.5L10 18.5L2 14.5V5.5Z"/><path d="M2 5.5L10 9.5L18 5.5M10 9.5V18.5"/></g></svg>
<div class="t" style="left:117px;top:338.92px;font-size:19px;color:#c4c4c4;font-weight:400;letter-spacing:0.45px;">NetworkManager</div>
<svg style="left:92px;top:364px;" width="20" height="20" viewBox="0 0 20 20"><g fill="none" stroke="#c8c8c8" stroke-width="1.5" stroke-linejoin="round"><path d="M10 1.5L18 5.5V14.5L10 18.5L2 14.5V5.5Z"/><path d="M2 5.5L10 9.5L18 5.5M10 9.5V18.5"/></g></svg>
<div class="t" style="left:117px;top:362.92px;font-size:19px;color:#c4c4c4;font-weight:400;letter-spacing:0.45px;">SceneCamera</div>
<div style="left:0px;top:386px;width:48px;height:24px;background:#34557f;"></div>
<div style="left:48px;top:386px;width:289px;height:24px;background:#2c5d87;"></div>
<svg style="left:92px;top:388px;" width="20" height="20" viewBox="0 0 20 20"><g fill="none" stroke="#c8c8c8" stroke-width="1.5" stroke-linejoin="round"><path d="M10 1.5L18 5.5V14.5L10 18.5L2 14.5V5.5Z"/><path d="M2 5.5L10 9.5L18 5.5M10 9.5V18.5"/></g></svg>
<div class="t" style="left:117px;top:386.92px;font-size:19px;color:#e8e8e8;font-weight:400;letter-spacing:0.45px;">MenuUI</div>
<svg style="left:92px;top:412px;" width="20" height="20" viewBox="0 0 20 20"><g fill="none" stroke="#c8c8c8" stroke-width="1.5" stroke-linejoin="round"><path d="M10 1.5L18 5.5V14.5L10 18.5L2 14.5V5.5Z"/><path d="M2 5.5L10 9.5L18 5.5M10 9.5V18.5"/></g></svg>
<div class="t" style="left:117px;top:410.92px;font-size:19px;color:#c4c4c4;font-weight:400;letter-spacing:0.45px;">EventSystem</div>
<svg style="left:351px;top:116px;" width="17" height="16" viewBox="0 0 17 16"><path d="M5 0.5V15.5M11 0.5V15.5M0.5 5H16.5M0.5 11H16.5" stroke="#c4c4c4" stroke-width="1.7"/></svg>
<div class="t" style="left:376px;top:114.92px;font-size:19px;color:#d2d2d2;font-weight:400;letter-spacing:0.35px;">Scene</div>
<svg style="left:469px;top:117px;" width="21" height="13" viewBox="0 0 21 13"><path d="M5 1H16A4.5 4.5 0 0 1 16 12.5C14 12.5 13 10 10.5 10C8 10 7 12.5 5 12.5A4.5 4.5 0 0 1 5 1Z" fill="#c4c4c4"/><path d="M3.2 6.8H7.8M5.5 4.5V9" stroke="#282828" stroke-width="1.4"/><circle cx="14" cy="5.5" r="1.1" fill="#282828"/><circle cx="16.5" cy="8" r="1.1" fill="#282828"/></svg>
<div class="t" style="left:494.5px;top:114.92px;font-size:19px;color:#c4c4c4;font-weight:400;letter-spacing:0.35px;">Game</div>
<svg style="left:1793px;top:116px;" width="6" height="16" viewBox="0 0 6 16"><circle cx="3" cy="2.5" r="1.9" fill="#c4c4c4"/><circle cx="3" cy="8" r="1.9" fill="#c4c4c4"/><circle cx="3" cy="13.5" r="1.9" fill="#c4c4c4"/></svg>
<div style="left:349px;top:146px;width:1px;height:24px;background:#5a5a5a;"></div>
<div style="left:353px;top:146px;width:1px;height:24px;background:#5a5a5a;"></div>
<div style="left:364px;top:143px;width:119px;height:30px;background:#585858;border-radius:4px"></div>
<svg style="left:371px;top:148px;" width="21" height="21" viewBox="0 0 21 21"><rect x="1" y="1" width="19" height="19" fill="none" stroke="#d0d0d0" stroke-width="1.4"/><path d="M3.5 17.5L7.5 13.5M13.5 7.5L17.5 3.5" stroke="#d0d0d0" stroke-width="1.3"/><circle cx="10.5" cy="10.5" r="3.5" fill="none" stroke="#f26a35" stroke-width="1.8"/></svg>
<div class="t" style="left:396px;top:148.92px;font-size:19px;color:#d2d2d2;font-weight:400;letter-spacing:0.35px;">Center</div>
<svg style="left:461px;top:155px;" width="12" height="7" viewBox="0 0 12 7"><path d="M0 0H12L6.0 7Z" fill="#c4c4c4"/></svg>
<div style="left:487px;top:143px;width:107px;height:30px;background:#585858;border-radius:4px"></div>
<svg style="left:494px;top:147px;" width="22" height="22" viewBox="0 0 22 22"><g fill="none" stroke="#d0d0d0" stroke-width="1.4" stroke-linejoin="round"><path d="M10 1.5L18.5 5.5V15L10 19.5L1.5 15V5.5Z"/><path d="M1.5 5.5L10 9.5L18.5 5.5M10 9.5V19.5"/></g><circle cx="16.5" cy="17" r="3.6" fill="#585858" stroke="#f26a35" stroke-width="1.8"/></svg>
<div class="t" style="left:519.5px;top:148.92px;font-size:19px;color:#d2d2d2;font-weight:400;letter-spacing:0.35px;">Local</div>
<svg style="left:573px;top:155px;" width="12" height="7" viewBox="0 0 12 7"><path d="M0 0H12L6.0 7Z" fill="#c4c4c4"/></svg>
<div style="left:606px;top:146px;width:1px;height:24px;background:#5a5a5a;"></div>
<div style="left:610px;top:146px;width:1px;height:24px;background:#5a5a5a;"></div>
<div style="left:622px;top:143px;width:33px;height:30px;background:#46607c;border-radius:4px 0 0 4px"></div>
<div style="left:657px;top:143px;width:20px;height:30px;background:#46607c;border-radius:0 4px 4px 0"></div>
<svg style="left:627px;top:149px;" width="22" height="19" viewBox="0 0 22 19"><g stroke="#e0e0e0" stroke-width="1.5" fill="none"><path d="M5 1V18M10.5 1V11M1 4.5H17M1 10H11M1 15.5H7"/><path d="M12 9L15.5 13.5L19 9M15.5 13.5V18.5" stroke-width="2.2"/></g></svg>
<svg style="left:661px;top:155px;" width="12" height="7" viewBox="0 0 12 7"><path d="M0 0H12L6.0 7Z" fill="#d0d0d0"/></svg>
<div style="left:682px;top:143px;width:33px;height:30px;background:#4b4b4b;border-radius:4px 0 0 4px"></div>
<div style="left:717px;top:143px;width:20px;height:30px;background:#4b4b4b;border-radius:0 4px 4px 0"></div>
<svg style="left:687px;top:149px;" width="22" height="19" viewBox="0 0 22 19"><g stroke="#8a8a8a" stroke-width="1.4" fill="none"><path d="M5 1V18M10.5 1V8M1 4.5H16M1 10H8M1 15.5H6"/></g><path d="M13 11H16A3 3 0 0 1 16 17H13" stroke="#c85a2c" stroke-width="2" fill="none"/><rect x="10" y="10" width="2.5" height="2.5" fill="#aaa"/><rect x="10" y="15.5" width="2.5" height="2.5" fill="#aaa"/></svg>
<svg style="left:721px;top:155px;" width="12" height="7" viewBox="0 0 12 7"><path d="M0 0H12L6.0 7Z" fill="#8a8a8a"/></svg>
<div style="left:742px;top:143px;width:54px;height:30px;background:#585858;border-radius:4px"></div>
<svg style="left:748px;top:147px;" width="21" height="22" viewBox="0 0 21 22"><g stroke="#d0d0d0" stroke-width="1.3"><path d="M1.5 2V21M19.5 2V21M5 5V17M8.5 5V15M12 5V17M15.5 5V15M1.5 11H19.5"/></g></svg>
<svg style="left:773px;top:155px;" width="12" height="7" viewBox="0 0 12 7"><path d="M0 0H12L6.0 7Z" fill="#c4c4c4"/></svg>
<div style="left:1355px;top:146px;width:1px;height:24px;background:#5a5a5a;"></div>
<div style="left:1359px;top:146px;width:1px;height:24px;background:#5a5a5a;"></div>
<div style="left:1371px;top:143px;width:55px;height:30px;background:#585858;border-radius:4px"></div>
<svg style="left:1377px;top:147px;" width="22" height="22" viewBox="0 0 22 22"><circle cx="11" cy="11" r="10" fill="#d8d8d8"/><circle cx="9" cy="9.5" r="8.3" fill="#585858"/><path d="M11 1A10 10 0 0 0 11 21" fill="none" stroke="#d8d8d8" stroke-width="1.5"/></svg>
<svg style="left:1404px;top:155px;" width="12" height="7" viewBox="0 0 12 7"><path d="M0 0H12L6.0 7Z" fill="#c4c4c4"/></svg>
<div style="left:1430px;top:143px;width:48px;height:30px;background:#46607c;border-radius:4px"></div>
<div class="t" style="left:1444px;top:148.92px;font-size:19px;color:#e8e8e8;font-weight:400;letter-spacing:0.4px;">2D</div>
<div style="left:1482px;top:143px;width:48px;height:30px;background:#46607c;border-radius:4px"></div>
<svg style="left:1498px;top:147px;" width="16" height="22" viewBox="0 0 16 22"><path d="M8 1A7 7 0 0 1 12.5 13.5V16H3.5V13.5A7 7 0 0 1 8 1Z" fill="#e6e6e6"/><path d="M4.5 17.5H11.5V19A3.5 3 0 0 1 4.5 19Z" fill="#e6e6e6"/></svg>
<div style="left:1534px;top:143px;width:48px;height:30px;background:#585858;border-radius:4px"></div>
<svg style="left:1546px;top:148px;" width="24" height="22" viewBox="0 0 24 22"><path d="M1 7H5L10 3V18L5 14H1Z" fill="#9c9c9c"/><path d="M13 13L19 19M19 13L13 19" stroke="#bdbdbd" stroke-width="1.6"/></svg>
<div style="left:1586px;top:143px;width:33px;height:30px;background:#46607c;border-radius:4px 0 0 4px"></div>
<div style="left:1621px;top:143px;width:21px;height:30px;background:#46607c;border-radius:0 4px 4px 0"></div>
<svg style="left:1591px;top:147px;" width="24" height="22" viewBox="0 0 24 22"><path d="M2 14L11 9L20 14L11 19Z" fill="#e6e6e6"/><path d="M2 11L9 7" stroke="#e6e6e6" stroke-width="2"/><path d="M2 17.5L11 22.5L20 17.5" fill="none" stroke="#e6e6e6" stroke-width="1.8"/><path d="M17 1L18.5 5L22.5 6.5L18.5 8L17 12L15.5 8L11.5 6.5L15.5 5Z" fill="#e6e6e6"/></svg>
<svg style="left:1625px;top:155px;" width="12" height="7" viewBox="0 0 12 7"><path d="M0 0H12L6.0 7Z" fill="#d0d0d0"/></svg>
<div style="left:1646px;top:143px;width:48px;height:30px;background:#46607c;border-radius:4px"></div>
<svg style="left:1658px;top:148px;" width="24" height="20" viewBox="0 0 24 20"><path d="M1.5 10C5 3.5 19 3.5 22.5 10C19 16.5 5 16.5 1.5 10Z" fill="none" stroke="#e0e0e0" stroke-width="1.6"/><circle cx="12" cy="10" r="3.3" fill="#e0e0e0"/><path d="M3 19L20 1" stroke="#46607c" stroke-width="3.5"/><path d="M3 19L20 1" stroke="#e0e0e0" stroke-width="1.6"/></svg>
<div style="left:1698px;top:143px;width:55px;height:30px;background:#585858;border-radius:4px"></div>
<svg style="left:1703px;top:151px;" width="21" height="14" viewBox="0 0 21 14"><rect x="0" y="1" width="14" height="12" rx="1.5" fill="#c4c4c4"/><path d="M14.5 5L20 1.5V12.5L14.5 9Z" fill="#c4c4c4"/></svg>
<svg style="left:1730px;top:155px;" width="12" height="7" viewBox="0 0 12 7"><path d="M0 0H12L6.0 7Z" fill="#c4c4c4"/></svg>
<div style="left:1757px;top:143px;width:33px;height:30px;background:#46607c;border-radius:4px 0 0 4px"></div>
<div style="left:1792px;top:143px;width:21px;height:30px;background:#46607c;border-radius:0 4px 4px 0"></div>
<svg style="left:1761px;top:146px;" width="24" height="24" viewBox="0 0 24 24"><g fill="none" stroke="#e6e6e6" stroke-width="1.6"><circle cx="12" cy="12" r="9.5"/><ellipse cx="12" cy="12" rx="4.5" ry="9.5"/><path d="M2.5 12H21.5"/></g><g fill="#e6e6e6"><circle cx="12" cy="2.5" r="2"/><circle cx="3" cy="12" r="2"/><circle cx="14" cy="17" r="2"/></g></svg>
<svg style="left:1796px;top:155px;" width="12" height="7" viewBox="0 0 12 7"><path d="M0 0H12L6.0 7Z" fill="#d0d0d0"/></svg>
<svg style="left:1832px;top:116px;" width="17" height="17" viewBox="0 0 17 17"><circle cx="8.5" cy="8.5" r="8" fill="#c4c4c4"/><circle cx="8.5" cy="4.5" r="1.6" fill="#3c3c3c"/><rect x="7" y="7" width="3" height="7" fill="#3c3c3c"/></svg>
<div class="t" style="left:1855px;top:114.92px;font-size:19px;color:#d2d2d2;font-weight:400;letter-spacing:0.35px;">Inspector</div>
<svg style="left:2186px;top:116px;" width="14" height="16" viewBox="0 0 14 16"><rect x="1" y="8" width="12" height="7" rx="1" fill="none" stroke="#c4c4c4" stroke-width="2"/><path d="M4 8V5a3 3 0 0 1 6 0v0.5" fill="none" stroke="#c4c4c4" stroke-width="2"/></svg>
<svg style="left:2217px;top:116px;" width="6" height="16" viewBox="0 0 6 16"><circle cx="3" cy="2.5" r="1.9" fill="#c4c4c4"/><circle cx="3" cy="8" r="1.9" fill="#c4c4c4"/><circle cx="3" cy="13.5" r="1.9" fill="#c4c4c4"/></svg>
<div style="left:1820px;top:138px;width:420px;height:89px;background:#3e3e3e;"></div>
<div style="left:1820px;top:227px;width:420px;height:2px;background:#242424;"></div>
<svg style="left:1830px;top:154px;" width="32" height="34" viewBox="0 0 32 34"><g fill="none" stroke="#c4c4c4" stroke-width="2" stroke-linejoin="round"><path d="M16 1.5L30 8.5V25.5L16 32.5L2 25.5V8.5Z"/><path d="M2 8.5L16 15.5L30 8.5M16 15.5V32.5"/></g></svg>
<svg style="left:1859px;top:185px;" width="12" height="7" viewBox="0 0 12 7"><path d="M0 0H12L6.0 7Z" fill="#c4c4c4"/></svg>
<div style="left:1890px;top:155px;width:21px;height:21px;background:#2a2a2a;border-radius:3px;border:1px solid #1c1c1c"></div>
<svg style="left:1893px;top:159px;" width="15" height="13" viewBox="0 0 15 13"><path d="M1.5 6.5L5.5 10.5L13.5 2" fill="none" stroke="#f0f0f0" stroke-width="2.4"/></svg>
<div style="left:1920px;top:152px;width:197px;height:26px;background:#2a2a2a;border-radius:3px;border:1px solid #212121;border-top-color:#111"></div>
<div class="t" style="left:1925px;top:156.92px;font-size:19px;color:#e0e0e0;font-weight:700;letter-spacing:0.3px;">MenuUI</div>
<div style="left:2124px;top:155px;width:21px;height:21px;background:#2a2a2a;border-radius:3px;border:1px solid #1c1c1c"></div>
<div class="t" style="left:2151px;top:156.92px;font-size:19px;color:#c4c4c4;font-weight:400;letter-spacing:0.35px;">Static</div>
<svg style="left:2218px;top:162px;" width="12" height="7" viewBox="0 0 12 7"><path d="M0 0H12L6.0 7Z" fill="#c4c4c4"/></svg>
<div class="t" style="left:1881px;top:192.92px;font-size:19px;color:#c4c4c4;font-weight:400;letter-spacing:0.35px;">Tag</div>
<div style="left:1921px;top:189px;width:124px;height:25px;background:#515151;border-radius:3px;border-bottom:1px solid #2a2a2a;box-shadow:0 0 0 1px #303030"></div>
<div class="t" style="left:1925px;top:190.92px;font-size:19px;color:#d2d2d2;font-weight:400;letter-spacing:0.3px;">Untagged</div>
<svg style="left:2027px;top:198px;" width="12" height="7" viewBox="0 0 12 7"><path d="M0 0H12L6.0 7Z" fill="#c4c4c4"/></svg>
<div class="t" style="left:2067px;top:192.92px;font-size:19px;color:#c4c4c4;font-weight:400;letter-spacing:0.35px;">Layer</div>
<div style="left:2125px;top:189px;width:107px;height:25px;background:#515151;border-radius:3px;border-bottom:1px solid #2a2a2a;box-shadow:0 0 0 1px #303030"></div>
<div class="t" style="left:2129px;top:190.92px;font-size:19px;color:#d2d2d2;font-weight:400;letter-spacing:0.3px;">UI</div>
<svg style="left:2214px;top:198px;" width="12" height="7" viewBox="0 0 12 7"><path d="M0 0H12L6.0 7Z" fill="#c4c4c4"/></svg>
<div style="left:1820px;top:229px;width:420px;height:30px;background:#3e3e3e;"></div>
<div style="left:1820px;top:228px;width:420px;height:1px;background:#1e1e1e;"></div>
<div style="left:1820px;top:259px;width:420px;height:1px;background:#2e2e2e;"></div>
<svg style="left:1829px;top:239px;" width="13" height="11" viewBox="0 0 13 11"><path d="M0 0H13L6.5 11Z" fill="#7a7a7a"/></svg>
<svg style="left:1852px;top:234px;" width="20" height="20" viewBox="0 0 20 20"><g fill="#c4c4c4" stroke="#c4c4c4" stroke-width="1" stroke-linejoin="round"><path d="M1.1 4.6L4.6 1.2L8 7.9Z"/><path d="M11.9 7.9L15.5 1.2L18.9 4.6Z"/><path d="M1.1 15.4L8 11.9L4.6 18.8Z"/><path d="M11.9 11.9L18.9 15.4L15.5 18.8Z"/></g></svg>
<div class="t" style="left:1910px;top:235.92px;font-size:19px;color:#dcdcdc;font-weight:700;letter-spacing:0.3px;">Rect Transform</div>
<svg style="left:2152px;top:236px;" width="16" height="16" viewBox="0 0 16 16"><circle cx="8" cy="8" r="7.8" fill="#c4c4c4"/><path d="M5.3 6A2.7 2.7 0 1 1 9.2 8.3C8.3 8.8 8 9.2 8 10.2" fill="none" stroke="#3e3e3e" stroke-width="2.1"/><circle cx="8" cy="12.8" r="1.2" fill="#3e3e3e"/></svg>
<svg style="left:2182px;top:235px;" width="16" height="17" viewBox="0 0 16 17"><g stroke="#c4c4c4" stroke-width="1.7"><path d="M0 4.5H16M0 12.5H16"/><path d="M10 1V8M5 9V16" stroke-width="2.2"/></g></svg>
<svg style="left:2217px;top:236px;" width="6" height="16" viewBox="0 0 6 16"><circle cx="3" cy="2.5" r="1.9" fill="#c4c4c4"/><circle cx="3" cy="8" r="1.9" fill="#c4c4c4"/><circle cx="3" cy="13.5" r="1.9" fill="#c4c4c4"/></svg>
<div style="left:1848px;top:267px;width:385px;height:26px;background:#3d3d3d;border-radius:4px;border:1.5px solid #222"></div>
<div class="t" style="left:1853px;top:272.3px;font-size:15px;color:#c4c4c4;font-weight:400;letter-spacing:0.6px;">Some values driven by Canvas.</div>
<div class="t" style="left:1949px;top:305.76px;font-size:18px;color:#8e8e8e;font-weight:400;letter-spacing:0.35px;">Pos X</div>
<div class="t" style="left:2045px;top:305.76px;font-size:18px;color:#8e8e8e;font-weight:400;letter-spacing:0.35px;">Pos Y</div>
<div class="t" style="left:2142px;top:305.76px;font-size:18px;color:#8e8e8e;font-weight:400;letter-spacing:0.35px;">Pos Z</div>
<div style="left:1948px;top:329px;width:91px;height:25px;background:#2a2a2a;border-radius:3px;border:1px solid #212121;border-top-color:#111"></div>
<div class="t" style="left:1953px;top:332.92px;font-size:19px;color:#9a9a9a;font-weight:400;letter-spacing:0.35px;overflow:hidden;width:85px">492.3333</div>
<div style="left:2045px;top:329px;width:91px;height:25px;background:#2a2a2a;border-radius:3px;border:1px solid #212121;border-top-color:#111"></div>
<div class="t" style="left:2050px;top:332.92px;font-size:19px;color:#9a9a9a;font-weight:400;letter-spacing:0.35px;overflow:hidden;width:85px">279.3333</div>
<div style="left:2141px;top:329px;width:92px;height:25px;background:#2a2a2a;border-radius:3px;border:1px solid #212121;border-top-color:#111"></div>
<div class="t" style="left:2146px;top:332.92px;font-size:19px;color:#9a9a9a;font-weight:400;letter-spacing:0.35px;overflow:hidden;width:86px">0</div>
<div class="t" style="left:1949px;top:359.76px;font-size:18px;color:#8e8e8e;font-weight:400;letter-spacing:0.35px;">Width</div>
<div class="t" style="left:2045px;top:359.76px;font-size:18px;color:#8e8e8e;font-weight:400;letter-spacing:0.35px;">Height</div>
<div style="left:1948px;top:383px;width:91px;height:25px;background:#2a2a2a;border-radius:3px;border:1px solid #212121;border-top-color:#111"></div>
<div class="t" style="left:1953px;top:386.92px;font-size:19px;color:#9a9a9a;font-weight:400;letter-spacing:0.35px;">984.6667</div>
<div style="left:2045px;top:383px;width:91px;height:25px;background:#2a2a2a;border-radius:3px;border:1px solid #212121;border-top-color:#111"></div>
<div class="t" style="left:2050px;top:386.92px;font-size:19px;color:#9a9a9a;font-weight:400;letter-spacing:0.35px;">558.6667</div>
<div style="left:2158px;top:381px;width:34px;height:26px;background:#585858;border-radius:3px 0 0 3px;border-bottom:1px solid #2a2a2a"></div>
<div style="left:2193px;top:381px;width:39px;height:26px;background:#585858;border-radius:0 3px 3px 0;border-bottom:1px solid #2a2a2a"></div>
<svg style="left:2166px;top:386px;" width="18" height="17" viewBox="0 0 18 17"><rect x="1" y="1" width="16" height="15" fill="none" stroke="#c4c4c4" stroke-width="1.8" stroke-dasharray="3 2.5"/></svg>
<div class="t" style="left:2205px;top:385.76px;font-size:18px;color:#bdbdbd;font-weight:400;letter-spacing:0px;">R</div>
<svg style="left:1831px;top:419px;" width="10" height="12" viewBox="0 0 10 12"><path d="M0 0V12L10 6.0Z" fill="#7a7a7a"/></svg>
<div class="t" style="left:1848px;top:416.92px;font-size:19px;color:#c4c4c4;font-weight:400;letter-spacing:0.35px;">Anchors</div>
<div class="t" style="left:1848px;top:445.92px;font-size:19px;color:#c4c4c4;font-weight:400;letter-spacing:0.35px;">Pivot</div>
<div class="t" style="left:1949px;top:445.92px;font-size:19px;color:#9a9a9a;font-weight:400;letter-spacing:0px;">X</div>
<div style="left:1966px;top:443px;width:73px;height:25px;background:#2a2a2a;border-radius:3px;border:1px solid #212121;border-top-color:#111"></div>
<div class="t" style="left:1970px;top:445.92px;font-size:19px;color:#9a9a9a;font-weight:400;letter-spacing:0.35px;">0.5</div>
<div class="t" style="left:2045px;top:445.92px;font-size:19px;color:#9a9a9a;font-weight:400;letter-spacing:0px;">Y</div>
<div style="left:2062px;top:443px;width:74px;height:25px;background:#2a2a2a;border-radius:3px;border:1px solid #212121;border-top-color:#111"></div>
<div class="t" style="left:2066px;top:445.92px;font-size:19px;color:#9a9a9a;font-weight:400;letter-spacing:0.35px;">0.5</div>
<div class="t" style="left:1848px;top:487.92px;font-size:19px;color:#c4c4c4;font-weight:400;letter-spacing:0.35px;">Rotation</div>
<div class="t" style="left:1953px;top:487.92px;font-size:19px;color:#9a9a9a;font-weight:400;letter-spacing:0px;">X</div>
<div style="left:1975px;top:484px;width:66px;height:26px;background:#2a2a2a;border-radius:3px;border:1px solid #212121;border-top-color:#111"></div>
<div class="t" style="left:1979px;top:487.92px;font-size:19px;color:#9a9a9a;font-weight:400;letter-spacing:0.35px;">0</div>
<div class="t" style="left:2049px;top:487.92px;font-size:19px;color:#9a9a9a;font-weight:400;letter-spacing:0px;">Y</div>
<div style="left:2071px;top:484px;width:66px;height:26px;background:#2a2a2a;border-radius:3px;border:1px solid #212121;border-top-color:#111"></div>
<div class="t" style="left:2075px;top:487.92px;font-size:19px;color:#9a9a9a;font-weight:400;letter-spacing:0.35px;">0</div>
<div class="t" style="left:2145px;top:487.92px;font-size:19px;color:#9a9a9a;font-weight:400;letter-spacing:0px;">Z</div>
<div style="left:2167px;top:484px;width:66px;height:26px;background:#2a2a2a;border-radius:3px;border:1px solid #212121;border-top-color:#111"></div>
<div class="t" style="left:2171px;top:487.92px;font-size:19px;color:#9a9a9a;font-weight:400;letter-spacing:0.35px;">0</div>
<div class="t" style="left:1848px;top:517.92px;font-size:19px;color:#c4c4c4;font-weight:400;letter-spacing:0.35px;">Scale</div>
<div class="t" style="left:1953px;top:517.92px;font-size:19px;color:#9a9a9a;font-weight:400;letter-spacing:0px;">X</div>
<div style="left:1975px;top:514px;width:66px;height:26px;background:#2a2a2a;border-radius:3px;border:1px solid #212121;border-top-color:#111"></div>
<div class="t" style="left:1979px;top:517.92px;font-size:19px;color:#9a9a9a;font-weight:400;letter-spacing:0.35px;">1</div>
<div class="t" style="left:2049px;top:517.92px;font-size:19px;color:#9a9a9a;font-weight:400;letter-spacing:0px;">Y</div>
<div style="left:2071px;top:514px;width:66px;height:26px;background:#2a2a2a;border-radius:3px;border:1px solid #212121;border-top-color:#111"></div>
<div class="t" style="left:2075px;top:517.92px;font-size:19px;color:#9a9a9a;font-weight:400;letter-spacing:0.35px;">1</div>
<div class="t" style="left:2145px;top:517.92px;font-size:19px;color:#9a9a9a;font-weight:400;letter-spacing:0px;">Z</div>
<div style="left:2167px;top:514px;width:66px;height:26px;background:#2a2a2a;border-radius:3px;border:1px solid #212121;border-top-color:#111"></div>
<div class="t" style="left:2171px;top:517.92px;font-size:19px;color:#9a9a9a;font-weight:400;letter-spacing:0.35px;">1</div>
<div style="left:1820px;top:556px;width:420px;height:30px;background:#3e3e3e;"></div>
<div style="left:1820px;top:555px;width:420px;height:1px;background:#1e1e1e;"></div>
<div style="left:1820px;top:586px;width:420px;height:1px;background:#2e2e2e;"></div>
<svg style="left:1829px;top:566px;" width="13" height="11" viewBox="0 0 13 11"><path d="M0 0H13L6.5 11Z" fill="#7a7a7a"/></svg>
<svg style="left:1851px;top:561px;" width="22" height="20" viewBox="0 0 22 20"><rect x="3" y="3" width="16" height="14" fill="#c4c4c4" stroke="#c4c4c4"/><rect x="5" y="5" width="12" height="10" fill="#6a6a6a"/><g fill="#c4c4c4"><circle cx="3" cy="3" r="2.5"/><circle cx="19" cy="3" r="2.5"/><circle cx="3" cy="17" r="2.5"/><circle cx="19" cy="17" r="2.5"/></g></svg>
<div style="left:1881px;top:561px;width:21px;height:21px;background:#2a2a2a;border-radius:3px;border:1px solid #1c1c1c"></div>
<svg style="left:1884px;top:565px;" width="15" height="13" viewBox="0 0 15 13"><path d="M1.5 6.5L5.5 10.5L13.5 2" fill="none" stroke="#f0f0f0" stroke-width="2.4"/></svg>
<div class="t" style="left:1910px;top:562.92px;font-size:19px;color:#dcdcdc;font-weight:700;letter-spacing:0.3px;">Canvas</div>
<svg style="left:2152px;top:563px;" width="16" height="16" viewBox="0 0 16 16"><circle cx="8" cy="8" r="7.8" fill="#c4c4c4"/><path d="M5.3 6A2.7 2.7 0 1 1 9.2 8.3C8.3 8.8 8 9.2 8 10.2" fill="none" stroke="#3e3e3e" stroke-width="2.1"/><circle cx="8" cy="12.8" r="1.2" fill="#3e3e3e"/></svg>
<svg style="left:2182px;top:562px;" width="16" height="17" viewBox="0 0 16 17"><g stroke="#c4c4c4" stroke-width="1.7"><path d="M0 4.5H16M0 12.5H16"/><path d="M10 1V8M5 9V16" stroke-width="2.2"/></g></svg>
<svg style="left:2217px;top:563px;" width="6" height="16" viewBox="0 0 6 16"><circle cx="3" cy="2.5" r="1.9" fill="#c4c4c4"/><circle cx="3" cy="8" r="1.9" fill="#c4c4c4"/><circle cx="3" cy="13.5" r="1.9" fill="#c4c4c4"/></svg>
<div class="t" style="left:1848px;top:597.92px;font-size:19px;color:#c4c4c4;font-weight:400;letter-spacing:0.35px;">Render Mode</div>
<div style="left:2032px;top:596px;width:200px;height:24px;background:#515151;border-radius:3px;border-bottom:1px solid #2a2a2a;box-shadow:0 0 0 1px #303030"></div>
<svg style="left:2214px;top:605px;" width="12" height="7" viewBox="0 0 12 7"><path d="M0 0H12L6.0 7Z" fill="#c4c4c4"/></svg>
<div class="t" style="left:2036px;top:597.92px;font-size:19px;color:#d2d2d2;font-weight:400;letter-spacing:0.3px;width:175px;overflow:hidden">Screen Space - Ove</div>
<div class="t" style="left:1871px;top:627.92px;font-size:19px;color:#c4c4c4;font-weight:400;letter-spacing:0.35px;">Pixel Perfect</div>
<div style="left:2030px;top:627px;width:21px;height:21px;background:#2a2a2a;border-radius:3px;border:1px solid #1c1c1c"></div>
<div class="t" style="left:1871px;top:657.92px;font-size:19px;color:#c4c4c4;font-weight:400;letter-spacing:0.35px;">Sort Order</div>
<div style="left:2030px;top:654px;width:203px;height:26px;background:#2a2a2a;border-radius:3px;border:1px solid #212121;border-top-color:#111"></div>
<div class="t" style="left:2034px;top:657.92px;font-size:19px;color:#d2d2d2;font-weight:400;letter-spacing:0px;">0</div>
<div class="t" style="left:1871px;top:687.92px;font-size:19px;color:#c4c4c4;font-weight:400;letter-spacing:0.35px;">Target Display</div>
<div style="left:2032px;top:686px;width:200px;height:24px;background:#515151;border-radius:3px;border-bottom:1px solid #2a2a2a;box-shadow:0 0 0 1px #303030"></div>
<div class="t" style="left:2036px;top:687.92px;font-size:19px;color:#d2d2d2;font-weight:400;letter-spacing:0.3px;">Display 1</div>
<svg style="left:2214px;top:695px;" width="12" height="7" viewBox="0 0 12 7"><path d="M0 0H12L6.0 7Z" fill="#c4c4c4"/></svg>
<div class="t" style="left:1848px;top:717.92px;font-size:19px;color:#c4c4c4;font-weight:400;letter-spacing:0.35px;width:180px;overflow:hidden">Additional Shader Cl</div>
<div style="left:2032px;top:716px;width:200px;height:24px;background:#515151;border-radius:3px;border-bottom:1px solid #2a2a2a;box-shadow:0 0 0 1px #303030"></div>
<div class="t" style="left:2036px;top:717.92px;font-size:19px;color:#d2d2d2;font-weight:400;letter-spacing:0.3px;">Nothing</div>
<svg style="left:2214px;top:725px;" width="12" height="7" viewBox="0 0 12 7"><path d="M0 0H12L6.0 7Z" fill="#c4c4c4"/></svg>
<div class="t" style="left:1848px;top:747.92px;font-size:19px;color:#c4c4c4;font-weight:400;letter-spacing:0.35px;">Vertex Color Always</div>
<div style="left:2030px;top:747px;width:21px;height:21px;background:#2a2a2a;border-radius:3px;border:1px solid #1c1c1c"></div>
<div style="left:1848px;top:775px;width:385px;height:80px;background:#3d3d3d;border-radius:4px;border:1.5px solid #222"></div>
<svg style="left:1856px;top:795px;" width="40" height="41" viewBox="0 0 40 41"><path d="M20 2L39 38H1Z" fill="#fec01a" stroke="#fec01a" stroke-width="2" stroke-linejoin="round"/><path d="M20 13V27" stroke="#3c3c3c" stroke-width="4.5" stroke-linecap="round"/><circle cx="20" cy="33" r="2.6" fill="#3c3c3c"/></svg>
<div class="t" style="left:1902px;top:781.3px;font-size:15px;color:#c4c4c4;font-weight:400;letter-spacing:0.72px;">Keep vertex color in Gamma space to allow</div>
<div class="t" style="left:1902px;top:799.3px;font-size:15px;color:#c4c4c4;font-weight:400;letter-spacing:0.72px;">gamma to linear color space conversion to</div>
<div class="t" style="left:1902px;top:817.3px;font-size:15px;color:#c4c4c4;font-weight:400;letter-spacing:0.72px;">happen in UI shaders. This will enhance UI</div>
<div class="t" style="left:1902px;top:835.3px;font-size:15px;color:#c4c4c4;font-weight:400;letter-spacing:0.72px;">color precision in linear color space.</div>
<div style="left:1820px;top:871px;width:420px;height:30px;background:#3e3e3e;"></div>
<div style="left:1820px;top:870px;width:420px;height:1px;background:#1e1e1e;"></div>
<div style="left:1820px;top:901px;width:420px;height:1px;background:#2e2e2e;"></div>
<svg style="left:1829px;top:881px;" width="13" height="11" viewBox="0 0 13 11"><path d="M0 0H13L6.5 11Z" fill="#7a7a7a"/></svg>
<svg style="left:1851px;top:877px;" width="22" height="19" viewBox="0 0 22 19"><rect x="1" y="1" width="20" height="17" fill="none" stroke="#c4c4c4" stroke-width="1.8"/><rect x="4" y="5" width="10" height="10" fill="#c4c4c4"/><rect x="14" y="1" width="7" height="5" fill="#c4c4c4"/></svg>
<div style="left:1881px;top:876px;width:21px;height:21px;background:#2a2a2a;border-radius:3px;border:1px solid #1c1c1c"></div>
<svg style="left:1884px;top:880px;" width="15" height="13" viewBox="0 0 15 13"><path d="M1.5 6.5L5.5 10.5L13.5 2" fill="none" stroke="#f0f0f0" stroke-width="2.4"/></svg>
<div class="t" style="left:1910px;top:877.92px;font-size:19px;color:#dcdcdc;font-weight:700;letter-spacing:0.3px;">Canvas Scaler</div>
<svg style="left:2152px;top:878px;" width="16" height="16" viewBox="0 0 16 16"><circle cx="8" cy="8" r="7.8" fill="#c4c4c4"/><path d="M5.3 6A2.7 2.7 0 1 1 9.2 8.3C8.3 8.8 8 9.2 8 10.2" fill="none" stroke="#3e3e3e" stroke-width="2.1"/><circle cx="8" cy="12.8" r="1.2" fill="#3e3e3e"/></svg>
<svg style="left:2182px;top:877px;" width="16" height="17" viewBox="0 0 16 17"><g stroke="#c4c4c4" stroke-width="1.7"><path d="M0 4.5H16M0 12.5H16"/><path d="M10 1V8M5 9V16" stroke-width="2.2"/></g></svg>
<svg style="left:2217px;top:878px;" width="6" height="16" viewBox="0 0 6 16"><circle cx="3" cy="2.5" r="1.9" fill="#c4c4c4"/><circle cx="3" cy="8" r="1.9" fill="#c4c4c4"/><circle cx="3" cy="13.5" r="1.9" fill="#c4c4c4"/></svg>
<div class="t" style="left:1848px;top:912.92px;font-size:19px;color:#c4c4c4;font-weight:400;letter-spacing:0.35px;">UI Scale Mode</div>
<div style="left:2032px;top:911px;width:200px;height:24px;background:#515151;border-radius:3px;border-bottom:1px solid #2a2a2a;box-shadow:0 0 0 1px #303030"></div>
<div class="t" style="left:2036px;top:912.92px;font-size:19px;color:#d2d2d2;font-weight:400;letter-spacing:0.3px;">Constant Pixel Size</div>
<svg style="left:2214px;top:920px;" width="12" height="7" viewBox="0 0 12 7"><path d="M0 0H12L6.0 7Z" fill="#c4c4c4"/></svg>
<div class="t" style="left:1848px;top:954.92px;font-size:19px;color:#c4c4c4;font-weight:400;letter-spacing:0.35px;">Scale Factor</div>
<div style="left:2031px;top:951px;width:202px;height:26px;background:#2a2a2a;border-radius:3px;border:1px solid #212121;border-top-color:#111"></div>
<div class="t" style="left:2035px;top:954.92px;font-size:19px;color:#d2d2d2;font-weight:400;letter-spacing:0px;">1</div>
<div class="t" style="left:1848px;top:984.92px;font-size:19px;color:#c4c4c4;font-weight:400;letter-spacing:0.35px;width:179px;overflow:hidden">Reference Pixels Per</div>
<div style="left:2031px;top:981px;width:202px;height:26px;background:#2a2a2a;border-radius:3px;border:1px solid #212121;border-top-color:#111"></div>
<div class="t" style="left:2035px;top:984.92px;font-size:19px;color:#d2d2d2;font-weight:400;letter-spacing:0.3px;">100</div>
<div style="left:1820px;top:1023px;width:420px;height:30px;background:#3e3e3e;"></div>
<div style="left:1820px;top:1022px;width:420px;height:1px;background:#1e1e1e;"></div>
<div style="left:1820px;top:1053px;width:420px;height:1px;background:#2e2e2e;"></div>
<svg style="left:1829px;top:1033px;" width="13" height="11" viewBox="0 0 13 11"><path d="M0 0H13L6.5 11Z" fill="#7a7a7a"/></svg>
<svg style="left:1850px;top:1027px;" width="24" height="24" viewBox="0 0 24 24"><path d="M2 2L6 6M18 18L22 22" stroke="#4fc3f7" stroke-width="1.8"/><rect x="6" y="6" width="12" height="12" fill="none" stroke="#c4c4c4" stroke-width="1.8"/><g fill="#c4c4c4"><circle cx="6" cy="6" r="2.3"/><circle cx="18" cy="6" r="2.3"/><circle cx="6" cy="18" r="2.3"/><circle cx="18" cy="18" r="2.3"/></g></svg>
<div style="left:1881px;top:1028px;width:21px;height:21px;background:#2a2a2a;border-radius:3px;border:1px solid #1c1c1c"></div>
<svg style="left:1884px;top:1032px;" width="15" height="13" viewBox="0 0 15 13"><path d="M1.5 6.5L5.5 10.5L13.5 2" fill="none" stroke="#f0f0f0" stroke-width="2.4"/></svg>
<div class="t" style="left:1910px;top:1029.92px;font-size:19px;color:#dcdcdc;font-weight:700;letter-spacing:0.3px;">Graphic Raycaster</div>
<svg style="left:2152px;top:1030px;" width="16" height="16" viewBox="0 0 16 16"><circle cx="8" cy="8" r="7.8" fill="#c4c4c4"/><path d="M5.3 6A2.7 2.7 0 1 1 9.2 8.3C8.3 8.8 8 9.2 8 10.2" fill="none" stroke="#3e3e3e" stroke-width="2.1"/><circle cx="8" cy="12.8" r="1.2" fill="#3e3e3e"/></svg>
<svg style="left:2182px;top:1029px;" width="16" height="17" viewBox="0 0 16 17"><g stroke="#c4c4c4" stroke-width="1.7"><path d="M0 4.5H16M0 12.5H16"/><path d="M10 1V8M5 9V16" stroke-width="2.2"/></g></svg>
<svg style="left:2217px;top:1030px;" width="6" height="16" viewBox="0 0 6 16"><circle cx="3" cy="2.5" r="1.9" fill="#c4c4c4"/><circle cx="3" cy="8" r="1.9" fill="#c4c4c4"/><circle cx="3" cy="13.5" r="1.9" fill="#c4c4c4"/></svg>
<div class="t" style="left:1850px;top:1063.92px;font-size:19px;color:#8a8a8a;font-weight:400;letter-spacing:0.35px;">Script</div>
<div style="left:2031px;top:1061px;width:202px;height:26px;background:#333333;border-radius:3px;border:1px solid #2a2a2a"></div>
<svg style="left:2037px;top:1066px;" width="16" height="16" viewBox="0 0 16 16"><path d="M1 1L3 3M13 13L15 15" stroke="#4fc3f7" stroke-width="1.3"/><rect x="3" y="3" width="10" height="10" fill="none" stroke="#8a8a8a" stroke-width="1.5"/><g fill="#8a8a8a"><circle cx="3" cy="3" r="1.8"/><circle cx="13" cy="3" r="1.8"/><circle cx="3" cy="13" r="1.8"/><circle cx="13" cy="13" r="1.8"/></g></svg>
<div class="t" style="left:2057px;top:1063.92px;font-size:19px;color:#8e8e8e;font-weight:400;letter-spacing:0.2px;width:149px;overflow:hidden">GraphicRaycaster</div>
<svg style="left:2210px;top:1065px;" width="18" height="18" viewBox="0 0 18 18"><circle cx="9" cy="9" r="7.5" fill="none" stroke="#9a9a9a" stroke-width="1.6"/><circle cx="9" cy="9" r="3" fill="#9a9a9a"/></svg>
<div class="t" style="left:1850px;top:1093.92px;font-size:19px;color:#c4c4c4;font-weight:400;letter-spacing:0.05px;">Ignore Reversed G...</div>
<div style="left:2031px;top:1092px;width:21px;height:21px;background:#2a2a2a;border-radius:3px;border:1px solid #1c1c1c"></div>
<svg style="left:2034px;top:1096px;" width="15" height="13" viewBox="0 0 15 13"><path d="M1.5 6.5L5.5 10.5L13.5 2" fill="none" stroke="#f0f0f0" stroke-width="2.4"/></svg>
<div class="t" style="left:1850px;top:1124.92px;font-size:19px;color:#c4c4c4;font-weight:400;letter-spacing:0.35px;">Blocking Objects</div>
<div style="left:2032px;top:1123px;width:200px;height:25px;background:#515151;border-radius:3px;border-bottom:1px solid #2a2a2a;box-shadow:0 0 0 1px #303030"></div>
<div class="t" style="left:2037px;top:1124.92px;font-size:19px;color:#d2d2d2;font-weight:400;letter-spacing:0.3px;">None</div>
<svg style="left:2214px;top:1132px;" width="12" height="7" viewBox="0 0 12 7"><path d="M0 0H12L6.0 7Z" fill="#c4c4c4"/></svg>
<div class="t" style="left:1850px;top:1159.92px;font-size:19px;color:#c4c4c4;font-weight:400;letter-spacing:0.35px;">Blocking Mask</div>
<div style="left:2032px;top:1157px;width:200px;height:25px;background:#515151;border-radius:3px;border-bottom:1px solid #2a2a2a;box-shadow:0 0 0 1px #303030"></div>
<div class="t" style="left:2037px;top:1158.92px;font-size:19px;color:#d2d2d2;font-weight:400;letter-spacing:0.3px;">Everything</div>
<svg style="left:2214px;top:1166px;" width="12" height="7" viewBox="0 0 12 7"><path d="M0 0H12L6.0 7Z" fill="#c4c4c4"/></svg>
<div style="left:1820px;top:1197px;width:420px;height:2px;background:#242424;"></div>
<div style="left:1859px;top:1213px;width:341px;height:32px;background:#585858;border-radius:3px;border-bottom:1px solid #2a2a2a;box-shadow:0 0 0 1px #303030"></div>
<div class="t" style="left:1959.5px;top:1219.42px;font-size:19px;color:#d2d2d2;font-weight:400;letter-spacing:0.35px;">Add Component</div>
<svg style="left:10px;top:1017px;" width="19" height="16" viewBox="0 0 19 16"><path d="M0.5 2A1.5 1.5 0 0 1 2 0.5H7L9 2.5H17A1.5 1.5 0 0 1 18.5 4V14A1.5 1.5 0 0 1 17 15.5H2A1.5 1.5 0 0 1 0.5 14Z" fill="#c4c4c4"/></svg>
<div class="t" style="left:34px;top:1015.92px;font-size:19px;color:#d2d2d2;font-weight:400;letter-spacing:0.35px;">Project</div>
<svg style="left:137px;top:1017px;" width="15" height="16" viewBox="0 0 15 16"><rect x="1" y="1" width="13" height="14" fill="none" stroke="#c4c4c4" stroke-width="1.6"/><path d="M3.5 4.5H11.5M3.5 7.5H9M3.5 10.5H11.5" stroke="#c4c4c4" stroke-width="1.6"/></svg>
<div class="t" style="left:159px;top:1015.92px;font-size:19px;color:#c4c4c4;font-weight:400;letter-spacing:0.35px;">Console</div>
<svg style="left:1763px;top:1017px;" width="14" height="16" viewBox="0 0 14 16"><rect x="1" y="8" width="12" height="7" rx="1" fill="none" stroke="#c4c4c4" stroke-width="2"/><path d="M4 8V5a3 3 0 0 1 6 0v0.5" fill="none" stroke="#c4c4c4" stroke-width="2"/></svg>
<svg style="left:1793px;top:1018px;" width="6" height="16" viewBox="0 0 6 16"><circle cx="3" cy="2.5" r="1.9" fill="#c4c4c4"/><circle cx="3" cy="8" r="1.9" fill="#c4c4c4"/><circle cx="3" cy="13.5" r="1.9" fill="#c4c4c4"/></svg>
<svg style="left:10px;top:1044px;" width="18" height="18" viewBox="0 0 18 18"><path d="M9 0V18M0 9H18" stroke="#c4c4c4" stroke-width="2.2"/></svg>
<svg style="left:35px;top:1051px;" width="10" height="6" viewBox="0 0 10 6"><path d="M0 0H10L5.0 6Z" fill="#c4c4c4"/></svg>
<div style="left:1117px;top:1042px;width:394px;height:24px;background:#2a2a2a;border-radius:6px 0 0 6px;border-top:1.5px solid #111"></div>
<div style="left:1511px;top:1042px;width:82px;height:24px;background:#2a2a2a;border-radius:0 6px 6px 0;border-top:1.5px solid #111"></div>
<div style="left:1566px;top:1044px;width:1px;height:20px;background:#3a3a3a;"></div>
<svg style="left:1122px;top:1048px;" width="12" height="13" viewBox="0 0 12 13"><circle cx="4.5" cy="4.5" r="3.3" fill="none" stroke="#c4c4c4" stroke-width="1.6"/><path d="M7 7L11 11.5" stroke="#c4c4c4" stroke-width="2"/></svg>
<svg style="left:1570px;top:1043px;" width="20" height="20" viewBox="0 0 20 20"><g fill="none" stroke="#c4c4c4" stroke-width="1.3"><rect x="6.5" y="1.5" width="12" height="12" rx="2"/><rect x="1.5" y="12.5" width="6" height="6"/><path d="M7.5 12.5L15 5M10.5 5H15V9.5"/></g></svg>
<div style="left:1597px;top:1039px;width:38px;height:30px;background:#363636;"></div>
<div style="left:1636px;top:1039px;width:37px;height:30px;background:#363636;"></div>
<div style="left:1675px;top:1039px;width:37px;height:30px;background:#363636;"></div>
<div style="left:1714px;top:1039px;width:37px;height:30px;background:#363636;"></div>
<div style="left:1753px;top:1039px;width:58px;height:30px;background:#363636;"></div>
<svg style="left:1605px;top:1044px;" width="20" height="20" viewBox="0 0 20 20"><rect x="2" y="1" width="7" height="8" fill="#c4c4c4"/><path d="M13 2L19 11H8Z" fill="#c4c4c4"/><circle cx="6" cy="14" r="5" fill="#c4c4c4"/></svg>
<svg style="left:1645px;top:1045px;" width="20" height="18" viewBox="0 0 20 18"><path d="M9 1H18V10L9 18L1 10Z" fill="#c4c4c4" transform="rotate(0)"/><circle cx="14.5" cy="4.5" r="1.5" fill="#363636"/></svg>
<svg style="left:1682px;top:1043px;" width="20" height="20" viewBox="0 0 20 20"><path d="M6 1H14L19 6V14L14 19H6L1 14V6Z" fill="#c4c4c4"/><rect x="8.6" y="4.5" width="2.8" height="8" fill="#363636"/><circle cx="10" cy="15.2" r="1.6" fill="#363636"/></svg>
<svg style="left:1722px;top:1044px;" width="20" height="19" viewBox="0 0 20 19"><path d="M10 0.5L12.8 6.6L19.5 7.3L14.5 11.8L15.9 18.5L10 15.1L4.1 18.5L5.5 11.8L0.5 7.3L7.2 6.6Z" fill="#8a8a8a"/></svg>
<svg style="left:1761px;top:1045px;" width="22" height="17" viewBox="0 0 22 17"><path d="M1 8.5C5 1.5 17 1.5 21 8.5C17 15.5 5 15.5 1 8.5Z" fill="none" stroke="#6a6a6a" stroke-width="1.6"/><circle cx="11" cy="8" r="4" fill="#6a6a6a"/></svg>
<div class="t" style="left:1783px;top:1045.92px;font-size:19px;color:#c4c4c4;font-weight:400;letter-spacing:0.3px;">23</div>
<div style="left:0px;top:1095px;width:291px;height:24px;background:#4d4d4d;"></div>
<svg style="left:7px;top:1078px;" width="13" height="11" viewBox="0 0 13 11"><path d="M0 0H13L6.5 11Z" fill="#7a7a7a"/></svg>
<svg style="left:27px;top:1077px;" width="21" height="16" viewBox="0 0 21 16"><path d="M0.5 2.5A1.5 1.5 0 0 1 2 1H7L9 3H15.5A1.5 1.5 0 0 1 17 4.5V6H5L0.5 14Z" fill="#c4c4c4"/><path d="M5 7H20.5L16.5 15.5H1Z" fill="#c4c4c4"/></svg>
<div class="t" style="left:52px;top:1072.42px;font-size:19px;color:#dcdcdc;font-weight:700;letter-spacing:0.5px;">Assets</div>
<svg style="left:48px;top:1100px;" width="19" height="16" viewBox="0 0 19 16"><path d="M0.5 2A1.5 1.5 0 0 1 2 0.5H7L9 2.5H17A1.5 1.5 0 0 1 18.5 4V14A1.5 1.5 0 0 1 17 15.5H2A1.5 1.5 0 0 1 0.5 14Z" fill="#c4c4c4"/></svg>
<div class="t" style="left:72px;top:1096.92px;font-size:19px;color:#c4c4c4;font-weight:400;letter-spacing:0.45px;">Prefabs</div>
<svg style="left:48px;top:1124px;" width="19" height="16" viewBox="0 0 19 16"><path d="M0.5 2A1.5 1.5 0 0 1 2 0.5H7L9 2.5H17A1.5 1.5 0 0 1 18.5 4V14A1.5 1.5 0 0 1 17 15.5H2A1.5 1.5 0 0 1 0.5 14Z" fill="#c4c4c4"/></svg>
<div class="t" style="left:72px;top:1120.92px;font-size:19px;color:#c4c4c4;font-weight:400;letter-spacing:0.45px;">Scenes</div>
<svg style="left:28px;top:1150px;" width="13" height="11" viewBox="0 0 13 11"><path d="M0 0H13L6.5 11Z" fill="#7a7a7a"/></svg>
<svg style="left:48px;top:1147px;" width="21" height="16" viewBox="0 0 21 16"><path d="M0.5 2.5A1.5 1.5 0 0 1 2 1H7L9 3H15.5A1.5 1.5 0 0 1 17 4.5V6H5L0.5 14Z" fill="#c4c4c4"/><path d="M5 7H20.5L16.5 15.5H1Z" fill="#c4c4c4"/></svg>
<div class="t" style="left:72px;top:1144.92px;font-size:19px;color:#c4c4c4;font-weight:400;letter-spacing:0.45px;">Scripts</div>
<svg style="left:69px;top:1172px;" width="19" height="16" viewBox="0 0 19 16"><path d="M0.5 2A1.5 1.5 0 0 1 2 0.5H7L9 2.5H17A1.5 1.5 0 0 1 18.5 4V14A1.5 1.5 0 0 1 17 15.5H2A1.5 1.5 0 0 1 0.5 14Z" fill="#c4c4c4"/></svg>
<div class="t" style="left:93px;top:1168.92px;font-size:19px;color:#c4c4c4;font-weight:400;letter-spacing:0.45px;">Player</div>
<svg style="left:28px;top:1197px;" width="11" height="12" viewBox="0 0 11 12"><path d="M0 0V12L11 6.0Z" fill="#7a7a7a"/></svg>
<svg style="left:48px;top:1196px;" width="19" height="16" viewBox="0 0 19 16"><path d="M0.5 2A1.5 1.5 0 0 1 2 0.5H7L9 2.5H17A1.5 1.5 0 0 1 18.5 4V14A1.5 1.5 0 0 1 17 15.5H2A1.5 1.5 0 0 1 0.5 14Z" fill="#c4c4c4"/></svg>
<div class="t" style="left:72px;top:1192.92px;font-size:19px;color:#c4c4c4;font-weight:400;letter-spacing:0.45px;">ThirdParty</div>
<svg style="left:7px;top:1222px;" width="13" height="11" viewBox="0 0 13 11"><path d="M0 0H13L6.5 11Z" fill="#7a7a7a"/></svg>
<svg style="left:27px;top:1221px;" width="21" height="16" viewBox="0 0 21 16"><path d="M0.5 2.5A1.5 1.5 0 0 1 2 1H7L9 3H15.5A1.5 1.5 0 0 1 17 4.5V6H5L0.5 14Z" fill="#c4c4c4"/><path d="M5 7H20.5L16.5 15.5H1Z" fill="#c4c4c4"/></svg>
<div class="t" style="left:52px;top:1216.42px;font-size:19px;color:#dcdcdc;font-weight:700;letter-spacing:0.5px;">Packages</div>
<svg style="left:28px;top:1245px;" width="11" height="12" viewBox="0 0 11 12"><path d="M0 0V12L11 6.0Z" fill="#7a7a7a"/></svg>
<svg style="left:48px;top:1244px;" width="19" height="16" viewBox="0 0 19 16"><path d="M0.5 2A1.5 1.5 0 0 1 2 0.5H7L9 2.5H17A1.5 1.5 0 0 1 18.5 4V14A1.5 1.5 0 0 1 17 15.5H2A1.5 1.5 0 0 1 0.5 14Z" fill="#c4c4c4"/></svg>
<div class="t" style="left:72px;top:1240.92px;font-size:19px;color:#c4c4c4;font-weight:400;letter-spacing:0.45px;">Burst</div>
<svg style="left:28px;top:1269px;" width="11" height="12" viewBox="0 0 11 12"><path d="M0 0V12L11 6.0Z" fill="#7a7a7a"/></svg>
<svg style="left:48px;top:1268px;" width="19" height="16" viewBox="0 0 19 16"><path d="M0.5 2A1.5 1.5 0 0 1 2 0.5H7L9 2.5H17A1.5 1.5 0 0 1 18.5 4V14A1.5 1.5 0 0 1 17 15.5H2A1.5 1.5 0 0 1 0.5 14Z" fill="#c4c4c4"/></svg>
<div class="t" style="left:72px;top:1264.92px;font-size:19px;color:#c4c4c4;font-weight:400;letter-spacing:0.45px;">Code Coverage</div>
<svg style="left:28px;top:1293px;" width="11" height="12" viewBox="0 0 11 12"><path d="M0 0V12L11 6.0Z" fill="#7a7a7a"/></svg>
<svg style="left:48px;top:1292px;" width="19" height="16" viewBox="0 0 19 16"><path d="M0.5 2A1.5 1.5 0 0 1 2 0.5H7L9 2.5H17A1.5 1.5 0 0 1 18.5 4V14A1.5 1.5 0 0 1 17 15.5H2A1.5 1.5 0 0 1 0.5 14Z" fill="#c4c4c4"/></svg>
<div class="t" style="left:72px;top:1288.92px;font-size:19px;color:#c4c4c4;font-weight:400;letter-spacing:0.45px;">Collections</div>
<svg style="left:28px;top:1317px;" width="11" height="12" viewBox="0 0 11 12"><path d="M0 0V12L11 6.0Z" fill="#7a7a7a"/></svg>
<svg style="left:48px;top:1316px;" width="19" height="16" viewBox="0 0 19 16"><path d="M0.5 2A1.5 1.5 0 0 1 2 0.5H7L9 2.5H17A1.5 1.5 0 0 1 18.5 4V14A1.5 1.5 0 0 1 17 15.5H2A1.5 1.5 0 0 1 0.5 14Z" fill="#c4c4c4"/></svg>
<div class="t" style="left:72px;top:1312.92px;font-size:19px;color:#c4c4c4;font-weight:400;letter-spacing:0.45px;">Custom NUnit</div>
<svg style="left:28px;top:1341px;" width="11" height="12" viewBox="0 0 11 12"><path d="M0 0V12L11 6.0Z" fill="#7a7a7a"/></svg>
<svg style="left:48px;top:1340px;" width="19" height="16" viewBox="0 0 19 16"><path d="M0.5 2A1.5 1.5 0 0 1 2 0.5H7L9 2.5H17A1.5 1.5 0 0 1 18.5 4V14A1.5 1.5 0 0 1 17 15.5H2A1.5 1.5 0 0 1 0.5 14Z" fill="#c4c4c4"/></svg>
<div class="t" style="left:72px;top:1336.92px;font-size:19px;color:#c4c4c4;font-weight:400;letter-spacing:0.45px;">Editor Coroutines</div>
<svg style="left:28px;top:1365px;" width="11" height="12" viewBox="0 0 11 12"><path d="M0 0V12L11 6.0Z" fill="#7a7a7a"/></svg>
<svg style="left:48px;top:1364px;" width="19" height="16" viewBox="0 0 19 16"><path d="M0.5 2A1.5 1.5 0 0 1 2 0.5H7L9 2.5H17A1.5 1.5 0 0 1 18.5 4V14A1.5 1.5 0 0 1 17 15.5H2A1.5 1.5 0 0 1 0.5 14Z" fill="#c4c4c4"/></svg>
<div class="t" style="left:72px;top:1360.92px;font-size:19px;color:#c4c4c4;font-weight:400;letter-spacing:0.45px;">JetBrains Rider Editor</div>
<div style="left:0px;top:1366px;width:291px;height:1px;background:#383838;"></div>
<svg style="left:295px;top:1082px;" width="12" height="7" viewBox="0 0 12 7"><path d="M0 7H12L6 0Z" fill="#c4c4c4"/></svg>
<div style="left:294px;top:1126px;width:14px;height:104px;background:#5f5f5f;border-radius:7px"></div>
<svg style="left:295px;top:1353px;" width="12" height="7" viewBox="0 0 12 7"><path d="M0 0H12L6 7Z" fill="#c4c4c4"/></svg>
<div class="t" style="left:318px;top:1075.42px;font-size:19px;color:#c4c4c4;font-weight:400;letter-spacing:0.45px;">Assets</div>
<svg style="left:384px;top:1080px;" width="8" height="14" viewBox="0 0 8 14"><path d="M1 1L7 7L1 13" fill="none" stroke="#a0a0a0" stroke-width="1.6"/></svg>
<div class="t" style="left:401px;top:1075.42px;font-size:19px;color:#dcdcdc;font-weight:700;letter-spacing:0.5px;">Prefabs</div>
<div style="left:337px;top:1120px;width:90px;height:90px;background:#505050;box-shadow:0 1px 2px rgba(0,0,0,0.4)"></div>
<svg style="left:337px;top:1120px;" width="90" height="90" viewBox="0 0 90 90"><defs><radialGradient id="sph" cx="0.38" cy="0.32" r="0.7"><stop offset="0" stop-color="#7a7a7a"/><stop offset="0.6" stop-color="#5a5a5a"/><stop offset="1" stop-color="#3a3a3a"/></radialGradient></defs><circle cx="36" cy="43" r="21" fill="url(#sph)"/><path d="M26 60C34 57 44 58 52 63L66 66" stroke="#2a2a2a" stroke-width="2" fill="none"/><path d="M40 58L44 66" stroke="#222" stroke-width="3"/></svg>
<svg style="left:350px;top:1216px;" width="17" height="18" viewBox="0 0 17 18"><path d="M8.5 1L16 5V13L8.5 17L1 13V5Z" fill="#58c3f7"/><path d="M1 5L8.5 9L16 5L8.5 1Z" fill="#9ee0ff"/><path d="M8.5 9V17L1 13V5Z" fill="#3aa8e8"/></svg>
<div class="t" style="left:371px;top:1217.03px;font-size:16.5px;color:#c4c4c4;font-weight:400;letter-spacing:0.3px;">Player</div>
<div style="left:1710px;top:1350px;width:82px;height:3px;background:#5e5e5e;border-radius:2px"></div>
<svg style="left:1749px;top:1343px;" width="17" height="17" viewBox="0 0 17 17"><circle cx="8.5" cy="8.5" r="7.5" fill="#9b9b9b"/></svg>
<div style="left:0px;top:1367px;width:2240px;height:33px;background:#191919;"></div>
<svg style="left:3px;top:1372px;" width="23" height="24" viewBox="0 0 23 24"><circle cx="11.5" cy="11" r="10.5" fill="#e6e6e6"/><path d="M6 18L3 23L10 20Z" fill="#e6e6e6"/><rect x="10" y="4.5" width="3.2" height="9.5" rx="1.2" fill="#191919"/><circle cx="11.6" cy="17" r="1.8" fill="#191919"/></svg>
<div class="t" style="left:31px;top:1374.92px;font-size:19px;color:#d2d2d2;font-weight:400;letter-spacing:0.26px;">There are 2 audio listeners in the scene. Please ensure there is always exactly one audio listener in the scene.</div>
<div style="left:2082px;top:1370px;width:2px;height:30px;background:#232323;"></div>
<div style="left:2121px;top:1370px;width:2px;height:30px;background:#232323;"></div>
<div style="left:2160px;top:1370px;width:2px;height:30px;background:#232323;"></div>
<div style="left:2199px;top:1370px;width:2px;height:30px;background:#232323;"></div>
<svg style="left:2090px;top:1374px;" width="22" height="22" viewBox="0 0 22 22"><ellipse cx="11" cy="13" rx="7" ry="8.5" fill="#c8c8c8"/><g stroke="#c8c8c8" stroke-width="2" stroke-linecap="round"><path d="M6 1.5L8 4.5M16 1.5L14 4.5M1.5 10L4.5 11.5M20.5 10L17.5 11.5M2 19L4.8 17M20 19L17.2 17"/></g><path d="M1 1L21 21" stroke="#191919" stroke-width="3.2"/><path d="M1 1L21 21" stroke="#c8c8c8" stroke-width="1.6"/></svg>
<svg style="left:2130px;top:1374px;" width="22" height="22" viewBox="0 0 22 22"><ellipse cx="11" cy="4.5" rx="8.5" ry="3.8" fill="#c8c8c8"/><path d="M2.5 7.5C2.5 11.5 19.5 11.5 19.5 7.5V11C19.5 15 2.5 15 2.5 11Z" fill="#c8c8c8"/><path d="M2.5 14.2C2.5 18.2 19.5 18.2 19.5 14.2V17.5C19.5 21.5 2.5 21.5 2.5 17.5Z" fill="#c8c8c8"/><path d="M1 1L21 21" stroke="#191919" stroke-width="3.2"/><path d="M1 1L21 21" stroke="#c8c8c8" stroke-width="1.6"/></svg>
<svg style="left:2168px;top:1374px;" width="22" height="22" viewBox="0 0 22 22"><g fill="none" stroke="#c8c8c8" stroke-width="1.7"><path d="M3 8A8.8 8.8 0 0 1 18 5.5"/><path d="M19 14A8.8 8.8 0 0 1 4 16.5"/></g><path d="M19.5 1.5L19 8L13.5 5Z M2.5 20.5L3 14L8.5 17Z" fill="#c8c8c8"/><circle cx="11" cy="10" r="4.2" fill="#c8c8c8"/><rect x="9" y="13" width="4" height="4" rx="1" fill="#c8c8c8"/><path d="M1 1L21 21" stroke="#191919" stroke-width="3.2"/><path d="M1 1L21 21" stroke="#c8c8c8" stroke-width="1.6"/></svg>
<svg style="left:2207px;top:1374px;" width="22" height="22" viewBox="0 0 22 22"><circle cx="11" cy="11" r="10" fill="none" stroke="#c4c4c4" stroke-width="1.6"/><path d="M6.5 11L9.5 14L15.5 8" fill="none" stroke="#c4c4c4" stroke-width="2"/></svg></div></body></html>
